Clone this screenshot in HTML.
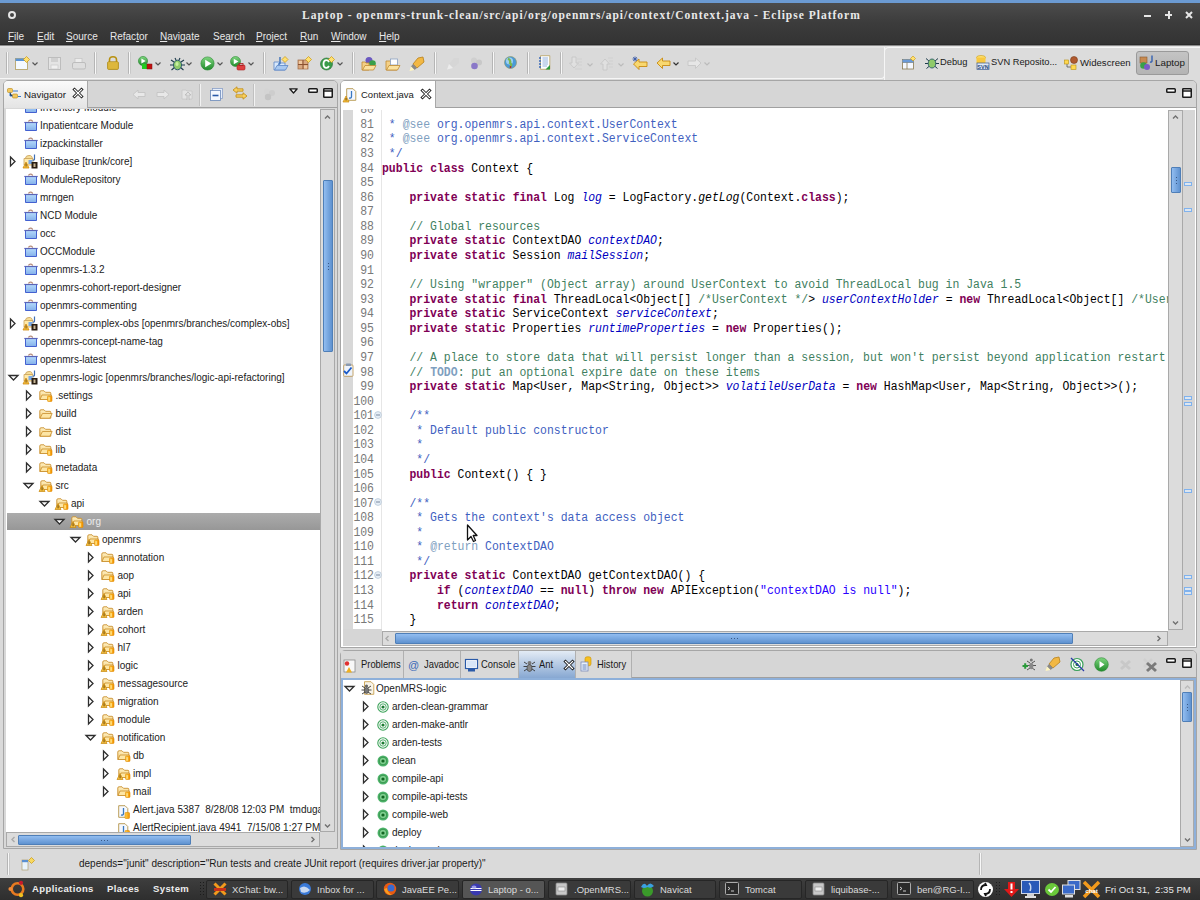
<!DOCTYPE html><html><head><meta charset="utf-8"><style>
*{margin:0;padding:0;box-sizing:border-box}
html,body{width:1200px;height:900px;overflow:hidden;background:#dadada;font-family:"Liberation Sans",sans-serif;font-size:10px;color:#000;position:relative}
.abs{position:absolute}
svg.abs{overflow:visible}
.t{position:absolute;white-space:pre;line-height:1}
.menu{color:#e8e8e8;font-size:10px}
.menu u{text-decoration:underline;text-underline-offset:1px;text-decoration-thickness:1px}
.sep{position:absolute;width:3px;background:linear-gradient(90deg,#b5b5b5 0,#b5b5b5 1px,#f8f8f8 1px,#f8f8f8 2px,#c8c8c8 2px);border-radius:1px}
.code{font-family:"Liberation Mono",monospace;font-size:11.46px}
.code .t,.t.code{transform:scaleY(1.14);transform-origin:0 8.8px}
.ln{color:#787878}
.k{color:#7f0055;font-weight:bold}
.c{color:#3f7f5f}
.d{color:#3f5fbf}
.dt{color:#7f9fbf}
.f{color:#0000c0;font-style:italic}
.s{color:#2a00ff}
.tree{font-size:10px;color:#222}
.tb{position:absolute;top:880px;height:19px;border:1px solid #262626;border-radius:2px;background:#3c3c3c;color:#dcdcdc;font-size:10.5px}
</style></head><body>
<svg width="0" height="0" style="position:absolute"><defs>
<linearGradient id="gblue" x1="0" y1="0" x2="0" y2="1"><stop offset="0" stop-color="#b4dafc"/><stop offset="1" stop-color="#84b0ea"/></linearGradient>
<linearGradient id="gyel" x1="0" y1="0" x2="0" y2="1"><stop offset="0" stop-color="#fff3c8"/><stop offset="1" stop-color="#f0c46a"/></linearGradient>
<linearGradient id="gora" x1="0" y1="0" x2="1" y2="0"><stop offset="0" stop-color="#ffd24a"/><stop offset="1" stop-color="#f29100"/></linearGradient>
<linearGradient id="gthumb" x1="0" y1="0" x2="1" y2="0"><stop offset="0" stop-color="#8db7e8"/><stop offset="1" stop-color="#5c8fcb"/></linearGradient>
<linearGradient id="gthumbh" x1="0" y1="0" x2="0" y2="1"><stop offset="0" stop-color="#8db7e8"/><stop offset="1" stop-color="#5c8fcb"/></linearGradient>
<linearGradient id="ggreen" x1="0" y1="0" x2="0" y2="1"><stop offset="0" stop-color="#7fd67f"/><stop offset="1" stop-color="#1f8a2a"/></linearGradient>
</defs></svg>
<div class="abs" style="left:0;top:0;width:1200px;height:45px;background:linear-gradient(#4e4e4e,#3c3c3c 50%,#333 97%,#2a2a2a 97%)"></div>
<div class="abs" style="left:0;top:45px;width:1200px;height:1px;background:#8a8a8a"></div>
<div class="abs" style="left:0;top:46px;width:1200px;height:2px;background:#e2e2e2"></div>
<div class="abs" style="left:0;top:0;width:1200px;height:3px;background:#6b9ad2"></div>
<div class="abs" style="left:8px;top:11px;width:8px;height:8px;border:2px solid #e6e6e6;border-radius:50%"></div>
<div class="t" style="left:302px;top:10px;color:#e9e9e9;font-family:'Liberation Serif',serif;font-weight:bold;font-size:11.5px;letter-spacing:1px">Laptop - openmrs-trunk-clean/src/api/org/openmrs/api/context/Context.java - Eclipse Platform</div>
<div class="abs" style="left:1144px;top:15px;width:7px;height:2px;background:#e6e6e6"></div>
<div class="abs" style="left:1165px;top:14px;width:7px;height:2px;background:#e6e6e6"></div><div class="abs" style="left:1167.5px;top:11px;width:2px;height:7.5px;background:#e6e6e6"></div>
<svg class="abs" style="left:1184.5px;top:10.5px" width="8" height="8" viewBox="0 0 8 8"><path d="M1 1 L7 7 M7 1 L1 7" stroke="#e6e6e6" stroke-width="2"/></svg>
<div class="t menu" style="left:8px;top:32px"><u>F</u>ile</div>
<div class="t menu" style="left:37px;top:32px"><u>E</u>dit</div>
<div class="t menu" style="left:66px;top:32px"><u>S</u>ource</div>
<div class="t menu" style="left:110px;top:32px">Refac<u>t</u>or</div>
<div class="t menu" style="left:160px;top:32px"><u>N</u>avigate</div>
<div class="t menu" style="left:213px;top:32px">Se<u>a</u>rch</div>
<div class="t menu" style="left:256px;top:32px"><u>P</u>roject</div>
<div class="t menu" style="left:300px;top:32px"><u>R</u>un</div>
<div class="t menu" style="left:331px;top:32px"><u>W</u>indow</div>
<div class="t menu" style="left:379px;top:32px"><u>H</u>elp</div>
<div class="sep" style="left:6px;top:52px;height:22px"></div>
<div class="sep" style="left:94px;top:52px;height:22px"></div>
<div class="sep" style="left:128px;top:52px;height:22px"></div>
<div class="sep" style="left:263px;top:52px;height:22px"></div>
<div class="sep" style="left:352px;top:52px;height:22px"></div>
<div class="sep" style="left:434px;top:52px;height:22px"></div>
<div class="sep" style="left:492px;top:52px;height:22px"></div>
<div class="sep" style="left:527px;top:52px;height:22px"></div>
<div class="sep" style="left:560px;top:52px;height:22px"></div>
<svg class="abs" style="left:15px;top:56px" width="15" height="14" viewBox="0 0 15 14"><rect x="0.5" y="2.5" width="12" height="11" fill="#f4f9ff" stroke="#b9a66a" stroke-width="0.9"/><rect x="0.5" y="2.5" width="12" height="2.5" fill="#5a93d6"/><path d="M11.5 0.5 L14.5 3.5 L11.5 6.5 L8.5 3.5 Z" fill="#ffe070" stroke="#c8960a" stroke-width="0.7"/></svg>
<svg class="abs" style="left:32px;top:62px" width="6" height="4" viewBox="0 0 6 4"><path d="M0.5 0.5 L3 3 L5.5 0.5" fill="none" stroke="#555" stroke-width="1.2"/></svg>
<svg class="abs" style="left:48px;top:57px" width="14" height="13" viewBox="0 0 14 13"><rect x="0.5" y="0.5" width="12" height="12" fill="#e4e4e4" stroke="#bdbdbd"/><rect x="3" y="1" width="7" height="4" fill="#d0d0d0"/><rect x="3" y="8" width="7" height="4" fill="#f0f0f0" stroke="#c4c4c4" stroke-width="0.6"/></svg>
<svg class="abs" style="left:72px;top:58px" width="14" height="12" viewBox="0 0 14 12"><rect x="3" y="0.5" width="7" height="4" fill="#ececec" stroke="#c4c4c4" stroke-width="0.7"/><rect x="0.5" y="4.5" width="13" height="6.5" rx="1.5" fill="#dedede" stroke="#bdbdbd"/></svg>
<svg class="abs" style="left:107px;top:56px" width="12" height="14" viewBox="0 0 12 14"><path d="M2.5 6 V4 Q2.5 0.8 6 0.8 Q9.5 0.8 9.5 4 V6" fill="none" stroke="#b8900e" stroke-width="1.6"/><rect x="0.6" y="5.8" width="10.8" height="7.6" rx="1" fill="#e8c44a" stroke="#a8840c" stroke-width="0.8"/><path d="M1 8 H11 M1 10 H11 M1 12 H11" stroke="#c29a1c" stroke-width="0.6"/></svg>
<svg class="abs" style="left:138px;top:56px" width="15" height="14" viewBox="0 0 15 14"><circle cx="5" cy="5" r="4.6" fill="url(#ggreen)" stroke="#2c8a34" stroke-width="0.6"/><path d="M3.39 2.47 L7.76 5 L3.39 7.529999999999999 Z" fill="#fff"/><rect x="4" y="8" width="5" height="5" fill="#22cc22"/><rect x="9" y="8" width="5" height="5" fill="#c01010" stroke="#801010" stroke-width="0.5"/></svg>
<svg class="abs" style="left:155px;top:62px" width="6" height="4" viewBox="0 0 6 4"><path d="M0.5 0.5 L3 3 L5.5 0.5" fill="none" stroke="#555" stroke-width="1.2"/></svg>
<svg class="abs" style="left:170px;top:57px" width="15" height="14" viewBox="0 0 15 14"><path d="M1 3 L4 5 M14 3 L11 5 M0 8 H4 M15 8 H11 M1.5 13 L4.5 10.5 M13.5 13 L10.5 10.5 M5 1 L6 3 M10 1 L9 3" stroke="#1c3a4a" stroke-width="1.1"/><ellipse cx="7.5" cy="8" rx="4" ry="4.8" fill="#8fca6a" stroke="#2a5a6a" stroke-width="1"/><ellipse cx="7" cy="7" rx="1.6" ry="2" fill="#c8f0a0"/></svg>
<svg class="abs" style="left:186px;top:62px" width="6" height="4" viewBox="0 0 6 4"><path d="M0.5 0.5 L3 3 L5.5 0.5" fill="none" stroke="#555" stroke-width="1.2"/></svg>
<svg class="abs" style="left:200px;top:56px" width="15" height="15" viewBox="0 0 15 15"><circle cx="7.5" cy="7.5" r="6.6" fill="url(#ggreen)" stroke="#2c8a34" stroke-width="0.6"/><path d="M5.19 3.87 L11.459999999999999 7.5 L5.19 11.129999999999999 Z" fill="#fff"/></svg>
<svg class="abs" style="left:217px;top:62px" width="6" height="4" viewBox="0 0 6 4"><path d="M0.5 0.5 L3 3 L5.5 0.5" fill="none" stroke="#555" stroke-width="1.2"/></svg>
<svg class="abs" style="left:230px;top:56px" width="16" height="15" viewBox="0 0 16 15"><circle cx="5.5" cy="5.5" r="5" fill="url(#ggreen)" stroke="#2c8a34" stroke-width="0.6"/><path d="M3.75 2.75 L8.5 5.5 L3.75 8.25 Z" fill="#fff"/><rect x="7" y="9" width="8" height="5" rx="1.2" fill="#e04040" stroke="#a82020" stroke-width="0.6"/><rect x="9" y="7.5" width="4" height="2" fill="none" stroke="#a82020" stroke-width="0.8"/></svg>
<svg class="abs" style="left:248px;top:62px" width="6" height="4" viewBox="0 0 6 4"><path d="M0.5 0.5 L3 3 L5.5 0.5" fill="none" stroke="#555" stroke-width="1.2"/></svg>
<svg class="abs" style="left:273px;top:56px" width="16" height="15" viewBox="0 0 16 15"><path d="M1 6 H6 L7 7 H12 V14 H1 Z" fill="#d8e8fb" stroke="#5a86c8" stroke-width="0.8"/><path d="M1.5 14 L4 9.5 H15 L12.5 14 Z" fill="#a8c8f0" stroke="#5a86c8" stroke-width="0.8"/><path d="M7 1 V7 Q7 8.5 5 8" fill="none" stroke="#3a6fb8" stroke-width="1.4"/><path d="M12 0.5 L15 3.5 L12 6.5 L9 3.5 Z" fill="#ffe070" stroke="#c8960a" stroke-width="0.7"/></svg>
<svg class="abs" style="left:297px;top:56px" width="15" height="14" viewBox="0 0 15 14"><rect x="1" y="4" width="10" height="9" fill="#d8a880" stroke="#a06840" stroke-width="0.7"/><path d="M6 4 V13 M1 8.5 H11" stroke="#8a5030" stroke-width="1"/><rect x="2" y="5" width="3" height="3" fill="#f0c8a0"/><rect x="7" y="9.5" width="3" height="3" fill="#f0c8a0"/><path d="M11.5 0.5 L14.5 3.5 L11.5 6.5 L8.5 3.5 Z" fill="#ffe070" stroke="#c8960a" stroke-width="0.7"/></svg>
<svg class="abs" style="left:320px;top:56px" width="15" height="15" viewBox="0 0 15 15"><circle cx="6.5" cy="8" r="6" fill="#3a9c4a" stroke="#1e6a2c" stroke-width="0.6"/><path d="M9 6 Q8 4.2 6.5 4.2 Q3.5 4.2 3.5 8 Q3.5 11.8 6.5 11.8 Q8 11.8 9 10" fill="none" stroke="#fff" stroke-width="1.8"/><path d="M11.5 0.5 L14.5 3.5 L11.5 6.5 L8.5 3.5 Z" fill="#ffe070" stroke="#c8960a" stroke-width="0.7"/></svg>
<svg class="abs" style="left:337px;top:62px" width="6" height="4" viewBox="0 0 6 4"><path d="M0.5 0.5 L3 3 L5.5 0.5" fill="none" stroke="#555" stroke-width="1.2"/></svg>
<svg class="abs" style="left:361px;top:56px" width="16" height="15" viewBox="0 0 16 15"><circle cx="8" cy="4.5" r="3.5" fill="#6a58c0"/><circle cx="11.5" cy="7.5" r="3.3" fill="#3aa04a"/><path d="M1 6 H4 L5 7 H8 V14 H1 Z" fill="#f4d088" stroke="#c08a30" stroke-width="0.8"/><path d="M1.5 14 L4 9.5 H15 L12.5 14 Z" fill="#fbe2a0" stroke="#c08a30" stroke-width="0.8"/></svg>
<svg class="abs" style="left:385px;top:56px" width="16" height="15" viewBox="0 0 16 15"><path d="M1 5 H5 L6 6 H12 V14 H1 Z" fill="#f4d088" stroke="#c08a30" stroke-width="0.8"/><rect x="5.5" y="3" width="7" height="6" fill="#fff" stroke="#8aa0c0" stroke-width="0.8"/><path d="M1.5 14 L4 9.5 H15 L12.5 14 Z" fill="#fbe2a0" stroke="#c08a30" stroke-width="0.8"/></svg>
<svg class="abs" style="left:409px;top:56px" width="16" height="15" viewBox="0 0 16 15"><path d="M9 2 L14 1 L15 6 L8 12 L4 8 Z" fill="#f2b844" stroke="#b8801a" stroke-width="0.8"/><path d="M4 8 L8 12 L5.5 14 L2 10.5 Z" fill="#8a8a8a"/><path d="M2 10.5 L5.5 14 L0.5 15 Z" fill="#fff6c0"/></svg>
<svg class="abs" style="left:446px;top:57px" width="14" height="13" viewBox="0 0 14 13"><path d="M8 1 L13 1 L13 6 L7 11 L3 7 Z" fill="#d6d6d6"/><path d="M3 7 L7 11 L1 12.5 Z" fill="#ececec"/></svg>
<svg class="abs" style="left:469px;top:57px" width="14" height="13" viewBox="0 0 14 13"><circle cx="5" cy="3.5" r="3" fill="#cfcfcf"/><circle cx="10" cy="5.5" r="3" fill="#c8c8c8"/><circle cx="5.5" cy="9" r="3.3" fill="#8a78c8"/></svg>
<svg class="abs" style="left:504px;top:56px" width="13" height="13" viewBox="0 0 13 13"><circle cx="6.5" cy="6.5" r="6" fill="#4a9ad8" stroke="#8a9a70" stroke-width="0.7"/><circle cx="5.5" cy="5" r="3.5" fill="#9ed0f0"/><path d="M4 2.5 Q7 4 6 7 Q8 8 6.5 10.5" stroke="#7ab850" stroke-width="2.2" fill="none"/><circle cx="6.5" cy="11" r="0.9" fill="#c02020"/></svg>
<svg class="abs" style="left:538px;top:55px" width="13" height="15" viewBox="0 0 13 15"><path d="M2.5 0.7 H11.8 V14.3 H2.5 Z" fill="#fbfdff" stroke="#b8a060" stroke-width="0.8"/><path d="M1 3 H3 M1 6 H3 M1 9 H3 M1 12 H3" stroke="#3a6ab8" stroke-width="1.4"/><path d="M4.5 3 H10 M4.5 5 H10 M4.5 7 H10 M4.5 9 H10 M4.5 11 H9" stroke="#8aaad8" stroke-width="0.9"/><path d="M12 10 V14.5 H7.5 Z" fill="#2a9a3a"/></svg>
<svg class="abs" style="left:569px;top:56px" width="14" height="15" viewBox="0 0 14 15"><path d="M3 1 H7 V7 H9.5 L5 12 L0.5 7 H3 Z" fill="#e0e0e0" stroke="#c4c4c4" stroke-width="0.8"/><path d="M8 3 H13 M9 6 H13 M9 9 H13 M6 13 H13" stroke="#cfcfcf" stroke-width="0.9"/></svg>
<svg class="abs" style="left:587px;top:63px" width="6" height="4" viewBox="0 0 6 4"><path d="M0.5 0.5 L3 3 L5.5 0.5" fill="none" stroke="#bbb" stroke-width="1.2"/></svg>
<svg class="abs" style="left:600px;top:56px" width="14" height="15" viewBox="0 0 14 15"><path d="M3 14 H7 V8 H9.5 L5 3 L0.5 8 H3 Z" fill="#e0e0e0" stroke="#c4c4c4" stroke-width="0.8"/><path d="M8 2 H13 M9 5 H13 M9 8 H13 M9 11 H13" stroke="#cfcfcf" stroke-width="0.9"/></svg>
<svg class="abs" style="left:618px;top:63px" width="6" height="4" viewBox="0 0 6 4"><path d="M0.5 0.5 L3 3 L5.5 0.5" fill="none" stroke="#bbb" stroke-width="1.2"/></svg>
<svg class="abs" style="left:632px;top:56px" width="17" height="14" viewBox="0 0 17 14"><path d="M1.5 8 L7 3 V6 H15 V10.5 H7 V13.5 Z" fill="#f8d870" stroke="#c88a10" stroke-width="0.9"/><path d="M3 0.5 V5.5 M0.5 3 H5.5 M1.2 1.2 L4.8 4.8 M4.8 1.2 L1.2 4.8" stroke="#3a5aa8" stroke-width="0.9"/></svg>
<svg class="abs" style="left:656px;top:57px" width="15" height="12" viewBox="0 0 15 12"><path d="M1 6 L6.5 1 V4 H14 V8.5 H6.5 V11.5 Z" fill="#f8d870" stroke="#c88a10" stroke-width="0.9"/></svg>
<svg class="abs" style="left:673px;top:62px" width="6" height="4" viewBox="0 0 6 4"><path d="M0.5 0.5 L3 3 L5.5 0.5" fill="none" stroke="#333" stroke-width="1.2"/></svg>
<svg class="abs" style="left:687px;top:57px" width="15" height="12" viewBox="0 0 15 12"><path d="M14 6 L8.5 1 V4 H1 V8.5 H8.5 V11.5 Z" fill="#e6e6e6" stroke="#c6c6c6" stroke-width="0.9"/></svg>
<svg class="abs" style="left:704px;top:62px" width="6" height="4" viewBox="0 0 6 4"><path d="M0.5 0.5 L3 3 L5.5 0.5" fill="none" stroke="#bbb" stroke-width="1.2"/></svg>
<div class="abs" style="left:-10px;top:47px;width:895px;height:32px;border-right:1px solid #f6f6f6;border-bottom:1px solid #f6f6f6;border-radius:0 0 4px 0"></div>
<div class="abs" style="left:884px;top:47px;width:316px;height:33px;border-left:1px solid #f6f6f6;border-top:1px solid #f6f6f6;border-radius:5px 0 0 0;background:#dcdcdc"></div>
<svg class="abs" style="left:902px;top:56px" width="14" height="14" viewBox="0 0 14 14"><rect x="0.5" y="3.5" width="11" height="9.5" fill="#f4f8ff" stroke="#8a7a50" stroke-width="0.8"/><path d="M0.5 6.5 H11.5 M5 3.5 V13" stroke="#8a7a50" stroke-width="0.8"/><rect x="0.5" y="3.5" width="11" height="3" fill="#6a9ad8"/><path d="M11 0 L13.5 2.5 L11 5 L8.5 2.5 Z" fill="#ffe070" stroke="#c8960a" stroke-width="0.6"/></svg>
<svg class="abs" style="left:925px;top:56px" width="14" height="14" viewBox="0 0 14 14"><path d="M1 2.5 L4 5 M13 2.5 L10 5 M0 7.5 H4 M14 7.5 H10 M1.5 12.5 L4.5 10 M12.5 12.5 L9.5 10" stroke="#1c3a4a" stroke-width="1"/><ellipse cx="7" cy="7.5" rx="3.8" ry="4.5" fill="#8fca6a" stroke="#2a5a6a" stroke-width="0.9"/></svg>
<div class="t" style="left:940px;top:58px;font-size:9.3px;color:#1a1a1a">Debug</div>
<svg class="abs" style="left:975px;top:55px" width="15" height="15" viewBox="0 0 15 15"><ellipse cx="6" cy="2.5" rx="4.5" ry="2" fill="#ffe070" stroke="#c89a10" stroke-width="0.6"/><rect x="1.5" y="2.5" width="9" height="6" fill="#f8c840"/><rect x="2" y="8" width="12" height="6.5" fill="#dfe8f5" stroke="#3a5a90" stroke-width="0.7"/><text x="8" y="13.5" font-size="5.5" font-family="Liberation Sans" font-weight="bold" fill="#2a4a80" text-anchor="middle">SVN</text></svg>
<div class="t" style="left:991px;top:58px;font-size:9.3px;color:#1a1a1a">SVN Reposito...</div>
<svg class="abs" style="left:1064px;top:56px" width="15" height="14" viewBox="0 0 15 14"><circle cx="10" cy="4" r="3.5" fill="#b05a30" stroke="#7a3a18" stroke-width="0.6"/><path d="M3 5 V11 H8" stroke="#555" stroke-width="0.8" fill="none"/><rect x="0.5" y="4" width="4" height="4" fill="#ffd850" stroke="#b89010" stroke-width="0.6"/><rect x="7" y="9" width="5" height="4.5" fill="#ffd850" stroke="#b89010" stroke-width="0.6"/></svg>
<div class="t" style="left:1080px;top:58px;font-size:9.6px;color:#1a1a1a">Widescreen</div>
<div class="abs" style="left:1136px;top:51px;width:53px;height:24px;border:1px solid #9a9a9a;border-radius:3px;background:linear-gradient(#c4c4c4,#b4b4b4)"></div>
<svg class="abs" style="left:1139px;top:55px" width="16" height="16" viewBox="0 0 16 16"><rect x="1" y="2" width="7" height="6" fill="#c88a50" stroke="#8a5a30" stroke-width="0.6"/><circle cx="4.5" cy="10.5" r="3.3" fill="#3aa04a"/><circle cx="8" cy="12" r="3" fill="#7a5ac8"/><path d="M13 0.5 V6 Q13 7.5 11 7" stroke="#2a5ab0" stroke-width="1.3" fill="none"/></svg>
<div class="t" style="left:1155px;top:58px;font-size:9.8px;color:#1a1a1a">Laptop</div>
<div class="abs" style="left:3px;top:80px;width:335px;height:769px;border:1px solid #a6a6a6;border-radius:5px 5px 0 0;background:#d8d8d8"></div>
<div class="abs" style="left:4px;top:81px;width:333px;height:27px;border-bottom:1px solid #a0a0a0;border-radius:4px 4px 0 0;background:#d6d6d6"></div>
<div class="abs" style="left:4px;top:81px;width:84px;height:27px;border-right:1px solid #a8a8a8;border-radius:4px 0 0 0;background:linear-gradient(#fafafa,#e4e4e4)"></div>
<div class="t" style="left:24px;top:90px;font-size:9.8px;color:#1a1a1a">Navigator</div>
<svg class="abs" style="left:7px;top:88px" width="15" height="12" viewBox="0 0 15 12"><rect x="0.5" y="0.5" width="5" height="4" rx="1" fill="#f2c860" stroke="#b8860b" stroke-width="0.6"/><rect x="5.5" y="6" width="5" height="4" rx="1" fill="#f2c860" stroke="#b8860b" stroke-width="0.6"/><path d="M3 4.5 V8 H5.5 M6 3 H11 M11 8.5 H14" stroke="#3a7ac8" stroke-width="1"/></svg>
<svg class="abs" style="left:73px;top:88px" width="10" height="10" viewBox="0 0 10 10"><path d="M1.5 1.5 L8.5 8.5 M8.5 1.5 L1.5 8.5" stroke="#1a1a1a" stroke-width="3" stroke-linecap="square"/><path d="M1.5 1.5 L8.5 8.5 M8.5 1.5 L1.5 8.5" stroke="#fff" stroke-width="1.2" stroke-linecap="square"/></svg>
<svg class="abs" style="left:132px;top:89px" width="14" height="11" viewBox="0 0 14 11"><path d="M1 5.5 L6 1 V3.5 H13 V7.5 H6 V10 Z" fill="#e8e8e8" stroke="#c4c4c4" stroke-width="0.9"/></svg>
<svg class="abs" style="left:156px;top:89px" width="14" height="11" viewBox="0 0 14 11"><path d="M13 5.5 L8 1 V3.5 H1 V7.5 H8 V10 Z" fill="#e8e8e8" stroke="#c4c4c4" stroke-width="0.9"/></svg>
<svg class="abs" style="left:181px;top:88px" width="13" height="13" viewBox="0 0 13 13"><path d="M1 2 H5 L6 3 H11 V11 H1 Z" fill="#e4e4e4" stroke="#c6c6c6" stroke-width="0.8"/><path d="M6 12 V7 H4 L7 4 L10 7 H8 V12" fill="#e0e0e0" stroke="#b8b8b8" stroke-width="0.8"/></svg>
<div class="abs" style="left:199px;top:84px;width:2px;height:22px;background:linear-gradient(90deg,#c0c0c0 50%,#f2f2f2 50%)"></div>
<svg class="abs" style="left:210px;top:88px" width="13" height="13" viewBox="0 0 13 13"><rect x="2.5" y="0.5" width="10" height="10" fill="#e6eefa" stroke="#8aa0c8" stroke-width="0.8"/><rect x="0.5" y="2.5" width="10" height="10" fill="#f4f8ff" stroke="#6a88b8" stroke-width="0.8"/><path d="M2.5 7.5 H8.5" stroke="#2a5aa8" stroke-width="1.6"/></svg>
<svg class="abs" style="left:232px;top:86px" width="16" height="15" viewBox="0 0 16 15"><path d="M1 4 L5 0.8 V2.8 H11 V5.2 H5 V7.2 Z" fill="#f8d060" stroke="#c08a10" stroke-width="0.8"/><path d="M15 10 L11 6.8 V8.8 H4 V11.2 H11 V13.2 Z" fill="#f8d060" stroke="#c08a10" stroke-width="0.8"/></svg>
<div class="abs" style="left:253px;top:84px;width:2px;height:22px;background:linear-gradient(90deg,#c0c0c0 50%,#f2f2f2 50%)"></div>
<svg class="abs" style="left:263px;top:88px" width="13" height="13" viewBox="0 0 13 13"><circle cx="4" cy="3.5" r="3" fill="#d4d4d4"/><circle cx="9" cy="5" r="3" fill="#cdcdcd"/><circle cx="5" cy="9" r="3.2" fill="#c4c4c4"/></svg>
<svg class="abs" style="left:289px;top:88px" width="9" height="6" viewBox="0 0 9 6"><path d="M0.8 0.8 H8.2 L4.5 5 Z" fill="#fff" stroke="#1a1a1a" stroke-width="1.3" stroke-linejoin="round"/></svg>
<svg class="abs" style="left:308px;top:88px" width="10" height="6" viewBox="0 0 10 6"><rect x="0.75" y="0.75" width="8.5" height="3.5" rx="0.8" fill="#fff" stroke="#1a1a1a" stroke-width="1.5"/></svg><svg class="abs" style="left:323px;top:88px" width="10" height="10" viewBox="0 0 10 10"><rect x="0.75" y="0.75" width="8.5" height="8.5" rx="0.6" fill="#fff" stroke="#1a1a1a" stroke-width="1.5"/><path d="M0.75 3 H9.25" stroke="#1a1a1a" stroke-width="1.5"/></svg>
<div class="abs" style="left:6px;top:109px;width:314px;height:723px;overflow:hidden;background:#fff">
<svg class="abs" style="left:17.5px;top:-8px" width="14" height="12" viewBox="0 0 14 12"><path d="M4.5 2.5 Q5 1 7 1.2 Q8.5 1.5 8.5 2.8" fill="none" stroke="#b48a78" stroke-width="1.2"/><path d="M1.5 3.5 H12.5 V11.5 H1.5 Z" fill="url(#gblue)" stroke="#3452cc" stroke-width="0.9"/><path d="M0.3 3.5 H13.7" stroke="#5a64b8" stroke-width="1.2"/></svg>
<div class="t tree" style="left:34.0px;top:-6.17px;color:#222">Inventory Module</div>
<svg class="abs" style="left:17.5px;top:10px" width="14" height="12" viewBox="0 0 14 12"><path d="M4.5 2.5 Q5 1 7 1.2 Q8.5 1.5 8.5 2.8" fill="none" stroke="#b48a78" stroke-width="1.2"/><path d="M1.5 3.5 H12.5 V11.5 H1.5 Z" fill="url(#gblue)" stroke="#3452cc" stroke-width="0.9"/><path d="M0.3 3.5 H13.7" stroke="#5a64b8" stroke-width="1.2"/></svg>
<div class="t tree" style="left:34.0px;top:11.83px;color:#222">Inpatientcare Module</div>
<svg class="abs" style="left:17.5px;top:28px" width="14" height="12" viewBox="0 0 14 12"><path d="M4.5 2.5 Q5 1 7 1.2 Q8.5 1.5 8.5 2.8" fill="none" stroke="#b48a78" stroke-width="1.2"/><path d="M1.5 3.5 H12.5 V11.5 H1.5 Z" fill="url(#gblue)" stroke="#3452cc" stroke-width="0.9"/><path d="M0.3 3.5 H13.7" stroke="#5a64b8" stroke-width="1.2"/></svg>
<div class="t tree" style="left:34.0px;top:29.83px;color:#222">izpackinstaller</div>
<svg class="abs" style="left:3.0px;top:46.5px" width="7" height="11" viewBox="0 0 7 11"><path d="M1.5 1 L6 5.5 L1.5 10 Z" fill="#fff" stroke="#2e2e2e" stroke-width="1.3" stroke-linejoin="miter"/></svg>
<svg class="abs" style="left:17.0px;top:45px" width="15" height="15" viewBox="0 0 15 15"><path d="M2 5 Q3 1 6 1.5 Q9 1 9.5 5 Z" fill="#f6de9a" stroke="#c9a055" stroke-width="0.8"/><path d="M1 4.5 H10 V11 H1Z" fill="#ffe9a8" stroke="#caa25a" stroke-width="0.8"/><path d="M11.5 0.5 V5 Q11.5 6.5 9.5 6" fill="none" stroke="#3f6fb5" stroke-width="1.2"/><rect x="5.5" y="6" width="4" height="4" fill="#7aa9e6"/><path d="M3 8 L6 14 H0 Z" fill="#f3bd3d" stroke="#d08a10" stroke-width="0.8"/><rect x="2.6" y="9.5" width="0.9" height="3" fill="#6b4a10"/><rect x="8.5" y="8" width="6" height="6.5" fill="#2a1e12"/><rect x="10.5" y="9.5" width="2" height="3.5" fill="#c8b898"/></svg>
<div class="t tree" style="left:34.0px;top:47.83px;color:#222">liquibase [trunk/core]</div>
<svg class="abs" style="left:17.5px;top:64px" width="14" height="12" viewBox="0 0 14 12"><path d="M4.5 2.5 Q5 1 7 1.2 Q8.5 1.5 8.5 2.8" fill="none" stroke="#b48a78" stroke-width="1.2"/><path d="M1.5 3.5 H12.5 V11.5 H1.5 Z" fill="url(#gblue)" stroke="#3452cc" stroke-width="0.9"/><path d="M0.3 3.5 H13.7" stroke="#5a64b8" stroke-width="1.2"/></svg>
<div class="t tree" style="left:34.0px;top:65.83px;color:#222">ModuleRepository</div>
<svg class="abs" style="left:17.5px;top:82px" width="14" height="12" viewBox="0 0 14 12"><path d="M4.5 2.5 Q5 1 7 1.2 Q8.5 1.5 8.5 2.8" fill="none" stroke="#b48a78" stroke-width="1.2"/><path d="M1.5 3.5 H12.5 V11.5 H1.5 Z" fill="url(#gblue)" stroke="#3452cc" stroke-width="0.9"/><path d="M0.3 3.5 H13.7" stroke="#5a64b8" stroke-width="1.2"/></svg>
<div class="t tree" style="left:34.0px;top:83.83px;color:#222">mrngen</div>
<svg class="abs" style="left:17.5px;top:100px" width="14" height="12" viewBox="0 0 14 12"><path d="M4.5 2.5 Q5 1 7 1.2 Q8.5 1.5 8.5 2.8" fill="none" stroke="#b48a78" stroke-width="1.2"/><path d="M1.5 3.5 H12.5 V11.5 H1.5 Z" fill="url(#gblue)" stroke="#3452cc" stroke-width="0.9"/><path d="M0.3 3.5 H13.7" stroke="#5a64b8" stroke-width="1.2"/></svg>
<div class="t tree" style="left:34.0px;top:101.83px;color:#222">NCD Module</div>
<svg class="abs" style="left:17.5px;top:118px" width="14" height="12" viewBox="0 0 14 12"><path d="M4.5 2.5 Q5 1 7 1.2 Q8.5 1.5 8.5 2.8" fill="none" stroke="#b48a78" stroke-width="1.2"/><path d="M1.5 3.5 H12.5 V11.5 H1.5 Z" fill="url(#gblue)" stroke="#3452cc" stroke-width="0.9"/><path d="M0.3 3.5 H13.7" stroke="#5a64b8" stroke-width="1.2"/></svg>
<div class="t tree" style="left:34.0px;top:119.83px;color:#222">occ</div>
<svg class="abs" style="left:17.5px;top:136px" width="14" height="12" viewBox="0 0 14 12"><path d="M4.5 2.5 Q5 1 7 1.2 Q8.5 1.5 8.5 2.8" fill="none" stroke="#b48a78" stroke-width="1.2"/><path d="M1.5 3.5 H12.5 V11.5 H1.5 Z" fill="url(#gblue)" stroke="#3452cc" stroke-width="0.9"/><path d="M0.3 3.5 H13.7" stroke="#5a64b8" stroke-width="1.2"/></svg>
<div class="t tree" style="left:34.0px;top:137.83px;color:#222">OCCModule</div>
<svg class="abs" style="left:17.5px;top:154px" width="14" height="12" viewBox="0 0 14 12"><path d="M4.5 2.5 Q5 1 7 1.2 Q8.5 1.5 8.5 2.8" fill="none" stroke="#b48a78" stroke-width="1.2"/><path d="M1.5 3.5 H12.5 V11.5 H1.5 Z" fill="url(#gblue)" stroke="#3452cc" stroke-width="0.9"/><path d="M0.3 3.5 H13.7" stroke="#5a64b8" stroke-width="1.2"/></svg>
<div class="t tree" style="left:34.0px;top:155.83px;color:#222">openmrs-1.3.2</div>
<svg class="abs" style="left:17.5px;top:172px" width="14" height="12" viewBox="0 0 14 12"><path d="M4.5 2.5 Q5 1 7 1.2 Q8.5 1.5 8.5 2.8" fill="none" stroke="#b48a78" stroke-width="1.2"/><path d="M1.5 3.5 H12.5 V11.5 H1.5 Z" fill="url(#gblue)" stroke="#3452cc" stroke-width="0.9"/><path d="M0.3 3.5 H13.7" stroke="#5a64b8" stroke-width="1.2"/></svg>
<div class="t tree" style="left:34.0px;top:173.83px;color:#222">openmrs-cohort-report-designer</div>
<svg class="abs" style="left:17.5px;top:190px" width="14" height="12" viewBox="0 0 14 12"><path d="M4.5 2.5 Q5 1 7 1.2 Q8.5 1.5 8.5 2.8" fill="none" stroke="#b48a78" stroke-width="1.2"/><path d="M1.5 3.5 H12.5 V11.5 H1.5 Z" fill="url(#gblue)" stroke="#3452cc" stroke-width="0.9"/><path d="M0.3 3.5 H13.7" stroke="#5a64b8" stroke-width="1.2"/></svg>
<div class="t tree" style="left:34.0px;top:191.83px;color:#222">openmrs-commenting</div>
<svg class="abs" style="left:3.0px;top:208.5px" width="7" height="11" viewBox="0 0 7 11"><path d="M1.5 1 L6 5.5 L1.5 10 Z" fill="#fff" stroke="#2e2e2e" stroke-width="1.3" stroke-linejoin="miter"/></svg>
<svg class="abs" style="left:17.0px;top:207px" width="15" height="15" viewBox="0 0 15 15"><path d="M2 5 Q3 1 6 1.5 Q9 1 9.5 5 Z" fill="#f6de9a" stroke="#c9a055" stroke-width="0.8"/><path d="M1 4.5 H10 V11 H1Z" fill="#ffe9a8" stroke="#caa25a" stroke-width="0.8"/><path d="M11.5 0.5 V5 Q11.5 6.5 9.5 6" fill="none" stroke="#3f6fb5" stroke-width="1.2"/><rect x="5.5" y="6" width="4" height="4" fill="#7aa9e6"/><path d="M3 8 L6 14 H0 Z" fill="#f3bd3d" stroke="#d08a10" stroke-width="0.8"/><rect x="2.6" y="9.5" width="0.9" height="3" fill="#6b4a10"/><rect x="8.5" y="8" width="6" height="6.5" fill="#2a1e12"/><rect x="10.5" y="9.5" width="2" height="3.5" fill="#c8b898"/></svg>
<div class="t tree" style="left:34.0px;top:209.83px;color:#222">openmrs-complex-obs [openmrs/branches/complex-obs]</div>
<svg class="abs" style="left:17.5px;top:226px" width="14" height="12" viewBox="0 0 14 12"><path d="M4.5 2.5 Q5 1 7 1.2 Q8.5 1.5 8.5 2.8" fill="none" stroke="#b48a78" stroke-width="1.2"/><path d="M1.5 3.5 H12.5 V11.5 H1.5 Z" fill="url(#gblue)" stroke="#3452cc" stroke-width="0.9"/><path d="M0.3 3.5 H13.7" stroke="#5a64b8" stroke-width="1.2"/></svg>
<div class="t tree" style="left:34.0px;top:227.83px;color:#222">openmrs-concept-name-tag</div>
<svg class="abs" style="left:17.5px;top:244px" width="14" height="12" viewBox="0 0 14 12"><path d="M4.5 2.5 Q5 1 7 1.2 Q8.5 1.5 8.5 2.8" fill="none" stroke="#b48a78" stroke-width="1.2"/><path d="M1.5 3.5 H12.5 V11.5 H1.5 Z" fill="url(#gblue)" stroke="#3452cc" stroke-width="0.9"/><path d="M0.3 3.5 H13.7" stroke="#5a64b8" stroke-width="1.2"/></svg>
<div class="t tree" style="left:34.0px;top:245.83px;color:#222">openmrs-latest</div>
<svg class="abs" style="left:1.5px;top:264.5px" width="11" height="7" viewBox="0 0 11 7"><path d="M1 1.5 L10 1.5 L5.5 6 Z" fill="#fff" stroke="#2e2e2e" stroke-width="1.3"/></svg>
<svg class="abs" style="left:17.0px;top:261px" width="15" height="15" viewBox="0 0 15 15"><path d="M2 5 Q3 1 6 1.5 Q9 1 9.5 5 Z" fill="#f6de9a" stroke="#c9a055" stroke-width="0.8"/><path d="M1 4.5 H10 V11 H1Z" fill="#ffe9a8" stroke="#caa25a" stroke-width="0.8"/><path d="M11.5 0.5 V5 Q11.5 6.5 9.5 6" fill="none" stroke="#3f6fb5" stroke-width="1.2"/><rect x="5.5" y="6" width="4" height="4" fill="#7aa9e6"/><path d="M3 8 L6 14 H0 Z" fill="#f3bd3d" stroke="#d08a10" stroke-width="0.8"/><rect x="2.6" y="9.5" width="0.9" height="3" fill="#6b4a10"/><rect x="8.5" y="8" width="6" height="6.5" fill="#2a1e12"/><rect x="10.5" y="9.5" width="2" height="3.5" fill="#c8b898"/></svg>
<div class="t tree" style="left:34.0px;top:263.83px;color:#222">openmrs-logic [openmrs/branches/logic-api-refactoring]</div>
<svg class="abs" style="left:18.5px;top:280.5px" width="7" height="11" viewBox="0 0 7 11"><path d="M1.5 1 L6 5.5 L1.5 10 Z" fill="#fff" stroke="#2e2e2e" stroke-width="1.3" stroke-linejoin="miter"/></svg>
<svg class="abs" style="left:33.0px;top:281px" width="14" height="12" viewBox="0 0 14 12"><path d="M0.8 2 Q0.8 0.8 2 0.8 H5 L6.5 2.3 H11 Q11.8 2.3 11.8 3.2 V9.5 H0.8 Z" fill="url(#gyel)" stroke="#c98f2e" stroke-width="0.9"/><path d="M1 9.5 L3 5 H12.5 L10.5 9.5 Z" fill="#fde6a6" stroke="#c98f2e" stroke-width="0.8"/><rect x="8.5" y="6" width="4.5" height="5.5" rx="0.8" fill="url(#gora)" stroke="#e08a00" stroke-width="0.6"/><rect x="9.6" y="7.2" width="1.1" height="3.5" fill="#ffe9a0"/></svg>
<div class="t tree" style="left:49.5px;top:281.83px;color:#222">.settings</div>
<svg class="abs" style="left:18.5px;top:298.5px" width="7" height="11" viewBox="0 0 7 11"><path d="M1.5 1 L6 5.5 L1.5 10 Z" fill="#fff" stroke="#2e2e2e" stroke-width="1.3" stroke-linejoin="miter"/></svg>
<svg class="abs" style="left:33.0px;top:300px" width="14" height="10" viewBox="0 0 14 10"><path d="M0.8 2 Q0.8 0.8 2 0.8 H5 L6.5 2.3 H11 Q11.8 2.3 11.8 3.2 V9.2 H0.8 Z" fill="url(#gyel)" stroke="#c98f2e" stroke-width="0.9"/><path d="M1 9.2 L3.5 4.5 H13.2 L10.8 9.2 Z" fill="#fde6a6" stroke="#c98f2e" stroke-width="0.8"/></svg>
<div class="t tree" style="left:49.5px;top:299.83px;color:#222">build</div>
<svg class="abs" style="left:18.5px;top:316.5px" width="7" height="11" viewBox="0 0 7 11"><path d="M1.5 1 L6 5.5 L1.5 10 Z" fill="#fff" stroke="#2e2e2e" stroke-width="1.3" stroke-linejoin="miter"/></svg>
<svg class="abs" style="left:33.0px;top:318px" width="14" height="10" viewBox="0 0 14 10"><path d="M0.8 2 Q0.8 0.8 2 0.8 H5 L6.5 2.3 H11 Q11.8 2.3 11.8 3.2 V9.2 H0.8 Z" fill="url(#gyel)" stroke="#c98f2e" stroke-width="0.9"/><path d="M1 9.2 L3.5 4.5 H13.2 L10.8 9.2 Z" fill="#fde6a6" stroke="#c98f2e" stroke-width="0.8"/></svg>
<div class="t tree" style="left:49.5px;top:317.83px;color:#222">dist</div>
<svg class="abs" style="left:18.5px;top:334.5px" width="7" height="11" viewBox="0 0 7 11"><path d="M1.5 1 L6 5.5 L1.5 10 Z" fill="#fff" stroke="#2e2e2e" stroke-width="1.3" stroke-linejoin="miter"/></svg>
<svg class="abs" style="left:33.0px;top:335px" width="14" height="12" viewBox="0 0 14 12"><path d="M0.8 2 Q0.8 0.8 2 0.8 H5 L6.5 2.3 H11 Q11.8 2.3 11.8 3.2 V9.5 H0.8 Z" fill="url(#gyel)" stroke="#c98f2e" stroke-width="0.9"/><path d="M1 9.5 L3 5 H12.5 L10.5 9.5 Z" fill="#fde6a6" stroke="#c98f2e" stroke-width="0.8"/><rect x="8.5" y="6" width="4.5" height="5.5" rx="0.8" fill="url(#gora)" stroke="#e08a00" stroke-width="0.6"/><rect x="9.6" y="7.2" width="1.1" height="3.5" fill="#ffe9a0"/></svg>
<div class="t tree" style="left:49.5px;top:335.83px;color:#222">lib</div>
<svg class="abs" style="left:18.5px;top:352.5px" width="7" height="11" viewBox="0 0 7 11"><path d="M1.5 1 L6 5.5 L1.5 10 Z" fill="#fff" stroke="#2e2e2e" stroke-width="1.3" stroke-linejoin="miter"/></svg>
<svg class="abs" style="left:33.0px;top:353px" width="14" height="12" viewBox="0 0 14 12"><path d="M0.8 2 Q0.8 0.8 2 0.8 H5 L6.5 2.3 H11 Q11.8 2.3 11.8 3.2 V9.5 H0.8 Z" fill="url(#gyel)" stroke="#c98f2e" stroke-width="0.9"/><path d="M1 9.5 L3 5 H12.5 L10.5 9.5 Z" fill="#fde6a6" stroke="#c98f2e" stroke-width="0.8"/><rect x="8.5" y="6" width="4.5" height="5.5" rx="0.8" fill="url(#gora)" stroke="#e08a00" stroke-width="0.6"/><rect x="9.6" y="7.2" width="1.1" height="3.5" fill="#ffe9a0"/></svg>
<div class="t tree" style="left:49.5px;top:353.83px;color:#222">metadata</div>
<svg class="abs" style="left:17.0px;top:372.5px" width="11" height="7" viewBox="0 0 11 7"><path d="M1 1.5 L10 1.5 L5.5 6 Z" fill="#fff" stroke="#2e2e2e" stroke-width="1.3"/></svg>
<svg class="abs" style="left:33.0px;top:371px" width="14" height="12" viewBox="0 0 14 12"><path d="M1.8 2 Q1.8 0.8 3 0.8 H6 L7.5 2.3 H11 Q11.8 2.3 11.8 3.2 V9.5 H1.8 Z" fill="url(#gyel)" stroke="#c98f2e" stroke-width="0.9"/><path d="M2 9.5 L4 5 H12.5 L10.5 9.5 Z" fill="#fde6a6" stroke="#c98f2e" stroke-width="0.8"/><path d="M3 5.5 L6 11.5 H0 Z" fill="#f3bd3d" stroke="#c98a10" stroke-width="0.7"/><rect x="2.6" y="7.3" width="0.9" height="3" fill="#5a3a08"/><rect x="8.5" y="6" width="4.5" height="5.5" rx="0.8" fill="url(#gora)" stroke="#e08a00" stroke-width="0.6"/><rect x="9.6" y="7.2" width="1.1" height="3.5" fill="#ffe9a0"/></svg>
<div class="t tree" style="left:49.5px;top:371.83px;color:#222">src</div>
<svg class="abs" style="left:32.5px;top:390.5px" width="11" height="7" viewBox="0 0 11 7"><path d="M1 1.5 L10 1.5 L5.5 6 Z" fill="#fff" stroke="#2e2e2e" stroke-width="1.3"/></svg>
<svg class="abs" style="left:48.5px;top:389px" width="14" height="12" viewBox="0 0 14 12"><path d="M1.8 2 Q1.8 0.8 3 0.8 H6 L7.5 2.3 H11 Q11.8 2.3 11.8 3.2 V9.5 H1.8 Z" fill="url(#gyel)" stroke="#c98f2e" stroke-width="0.9"/><path d="M2 9.5 L4 5 H12.5 L10.5 9.5 Z" fill="#fde6a6" stroke="#c98f2e" stroke-width="0.8"/><path d="M3 5.5 L6 11.5 H0 Z" fill="#f3bd3d" stroke="#c98a10" stroke-width="0.7"/><rect x="2.6" y="7.3" width="0.9" height="3" fill="#5a3a08"/><rect x="8.5" y="6" width="4.5" height="5.5" rx="0.8" fill="url(#gora)" stroke="#e08a00" stroke-width="0.6"/><rect x="9.6" y="7.2" width="1.1" height="3.5" fill="#ffe9a0"/></svg>
<div class="t tree" style="left:65.0px;top:389.83px;color:#222">api</div>
<div class="abs" style="left:1px;top:404px;width:313px;height:17px;background:linear-gradient(#acacac,#979797)"></div>
<svg class="abs" style="left:48.0px;top:408.5px" width="11" height="7" viewBox="0 0 11 7"><path d="M1 1.5 L10 1.5 L5.5 6 Z" fill="#fff" stroke="#2e2e2e" stroke-width="1.3"/></svg>
<svg class="abs" style="left:64.0px;top:407px" width="14" height="12" viewBox="0 0 14 12"><path d="M1.8 2 Q1.8 0.8 3 0.8 H6 L7.5 2.3 H11 Q11.8 2.3 11.8 3.2 V9.5 H1.8 Z" fill="url(#gyel)" stroke="#c98f2e" stroke-width="0.9"/><path d="M2 9.5 L4 5 H12.5 L10.5 9.5 Z" fill="#fde6a6" stroke="#c98f2e" stroke-width="0.8"/><path d="M3 5.5 L6 11.5 H0 Z" fill="#f3bd3d" stroke="#c98a10" stroke-width="0.7"/><rect x="2.6" y="7.3" width="0.9" height="3" fill="#5a3a08"/><rect x="8.5" y="6" width="4.5" height="5.5" rx="0.8" fill="url(#gora)" stroke="#e08a00" stroke-width="0.6"/><rect x="9.6" y="7.2" width="1.1" height="3.5" fill="#ffe9a0"/></svg>
<div class="t tree" style="left:80.5px;top:407.83px;color:#ececec">org</div>
<svg class="abs" style="left:63.5px;top:426.5px" width="11" height="7" viewBox="0 0 11 7"><path d="M1 1.5 L10 1.5 L5.5 6 Z" fill="#fff" stroke="#2e2e2e" stroke-width="1.3"/></svg>
<svg class="abs" style="left:79.5px;top:425px" width="14" height="12" viewBox="0 0 14 12"><path d="M1.8 2 Q1.8 0.8 3 0.8 H6 L7.5 2.3 H11 Q11.8 2.3 11.8 3.2 V9.5 H1.8 Z" fill="url(#gyel)" stroke="#c98f2e" stroke-width="0.9"/><path d="M2 9.5 L4 5 H12.5 L10.5 9.5 Z" fill="#fde6a6" stroke="#c98f2e" stroke-width="0.8"/><path d="M3 5.5 L6 11.5 H0 Z" fill="#f3bd3d" stroke="#c98a10" stroke-width="0.7"/><rect x="2.6" y="7.3" width="0.9" height="3" fill="#5a3a08"/><rect x="8.5" y="6" width="4.5" height="5.5" rx="0.8" fill="url(#gora)" stroke="#e08a00" stroke-width="0.6"/><rect x="9.6" y="7.2" width="1.1" height="3.5" fill="#ffe9a0"/></svg>
<div class="t tree" style="left:96.0px;top:425.83px;color:#222">openmrs</div>
<svg class="abs" style="left:80.5px;top:442.5px" width="7" height="11" viewBox="0 0 7 11"><path d="M1.5 1 L6 5.5 L1.5 10 Z" fill="#fff" stroke="#2e2e2e" stroke-width="1.3" stroke-linejoin="miter"/></svg>
<svg class="abs" style="left:95.0px;top:443px" width="14" height="12" viewBox="0 0 14 12"><path d="M0.8 2 Q0.8 0.8 2 0.8 H5 L6.5 2.3 H11 Q11.8 2.3 11.8 3.2 V9.5 H0.8 Z" fill="url(#gyel)" stroke="#c98f2e" stroke-width="0.9"/><path d="M1 9.5 L3 5 H12.5 L10.5 9.5 Z" fill="#fde6a6" stroke="#c98f2e" stroke-width="0.8"/><rect x="8.5" y="6" width="4.5" height="5.5" rx="0.8" fill="url(#gora)" stroke="#e08a00" stroke-width="0.6"/><rect x="9.6" y="7.2" width="1.1" height="3.5" fill="#ffe9a0"/></svg>
<div class="t tree" style="left:111.5px;top:443.83px;color:#222">annotation</div>
<svg class="abs" style="left:80.5px;top:460.5px" width="7" height="11" viewBox="0 0 7 11"><path d="M1.5 1 L6 5.5 L1.5 10 Z" fill="#fff" stroke="#2e2e2e" stroke-width="1.3" stroke-linejoin="miter"/></svg>
<svg class="abs" style="left:95.0px;top:461px" width="14" height="12" viewBox="0 0 14 12"><path d="M0.8 2 Q0.8 0.8 2 0.8 H5 L6.5 2.3 H11 Q11.8 2.3 11.8 3.2 V9.5 H0.8 Z" fill="url(#gyel)" stroke="#c98f2e" stroke-width="0.9"/><path d="M1 9.5 L3 5 H12.5 L10.5 9.5 Z" fill="#fde6a6" stroke="#c98f2e" stroke-width="0.8"/><rect x="8.5" y="6" width="4.5" height="5.5" rx="0.8" fill="url(#gora)" stroke="#e08a00" stroke-width="0.6"/><rect x="9.6" y="7.2" width="1.1" height="3.5" fill="#ffe9a0"/></svg>
<div class="t tree" style="left:111.5px;top:461.83px;color:#222">aop</div>
<svg class="abs" style="left:80.5px;top:478.5px" width="7" height="11" viewBox="0 0 7 11"><path d="M1.5 1 L6 5.5 L1.5 10 Z" fill="#fff" stroke="#2e2e2e" stroke-width="1.3" stroke-linejoin="miter"/></svg>
<svg class="abs" style="left:95.0px;top:479px" width="14" height="12" viewBox="0 0 14 12"><path d="M1.8 2 Q1.8 0.8 3 0.8 H6 L7.5 2.3 H11 Q11.8 2.3 11.8 3.2 V9.5 H1.8 Z" fill="url(#gyel)" stroke="#c98f2e" stroke-width="0.9"/><path d="M2 9.5 L4 5 H12.5 L10.5 9.5 Z" fill="#fde6a6" stroke="#c98f2e" stroke-width="0.8"/><path d="M3 5.5 L6 11.5 H0 Z" fill="#f3bd3d" stroke="#c98a10" stroke-width="0.7"/><rect x="2.6" y="7.3" width="0.9" height="3" fill="#5a3a08"/><rect x="8.5" y="6" width="4.5" height="5.5" rx="0.8" fill="url(#gora)" stroke="#e08a00" stroke-width="0.6"/><rect x="9.6" y="7.2" width="1.1" height="3.5" fill="#ffe9a0"/></svg>
<div class="t tree" style="left:111.5px;top:479.83px;color:#222">api</div>
<svg class="abs" style="left:80.5px;top:496.5px" width="7" height="11" viewBox="0 0 7 11"><path d="M1.5 1 L6 5.5 L1.5 10 Z" fill="#fff" stroke="#2e2e2e" stroke-width="1.3" stroke-linejoin="miter"/></svg>
<svg class="abs" style="left:95.0px;top:497px" width="14" height="12" viewBox="0 0 14 12"><path d="M1.8 2 Q1.8 0.8 3 0.8 H6 L7.5 2.3 H11 Q11.8 2.3 11.8 3.2 V9.5 H1.8 Z" fill="url(#gyel)" stroke="#c98f2e" stroke-width="0.9"/><path d="M2 9.5 L4 5 H12.5 L10.5 9.5 Z" fill="#fde6a6" stroke="#c98f2e" stroke-width="0.8"/><path d="M3 5.5 L6 11.5 H0 Z" fill="#f3bd3d" stroke="#c98a10" stroke-width="0.7"/><rect x="2.6" y="7.3" width="0.9" height="3" fill="#5a3a08"/><rect x="8.5" y="6" width="4.5" height="5.5" rx="0.8" fill="url(#gora)" stroke="#e08a00" stroke-width="0.6"/><rect x="9.6" y="7.2" width="1.1" height="3.5" fill="#ffe9a0"/></svg>
<div class="t tree" style="left:111.5px;top:497.83px;color:#222">arden</div>
<svg class="abs" style="left:80.5px;top:514.5px" width="7" height="11" viewBox="0 0 7 11"><path d="M1.5 1 L6 5.5 L1.5 10 Z" fill="#fff" stroke="#2e2e2e" stroke-width="1.3" stroke-linejoin="miter"/></svg>
<svg class="abs" style="left:95.0px;top:515px" width="14" height="12" viewBox="0 0 14 12"><path d="M1.8 2 Q1.8 0.8 3 0.8 H6 L7.5 2.3 H11 Q11.8 2.3 11.8 3.2 V9.5 H1.8 Z" fill="url(#gyel)" stroke="#c98f2e" stroke-width="0.9"/><path d="M2 9.5 L4 5 H12.5 L10.5 9.5 Z" fill="#fde6a6" stroke="#c98f2e" stroke-width="0.8"/><path d="M3 5.5 L6 11.5 H0 Z" fill="#f3bd3d" stroke="#c98a10" stroke-width="0.7"/><rect x="2.6" y="7.3" width="0.9" height="3" fill="#5a3a08"/><rect x="8.5" y="6" width="4.5" height="5.5" rx="0.8" fill="url(#gora)" stroke="#e08a00" stroke-width="0.6"/><rect x="9.6" y="7.2" width="1.1" height="3.5" fill="#ffe9a0"/></svg>
<div class="t tree" style="left:111.5px;top:515.83px;color:#222">cohort</div>
<svg class="abs" style="left:80.5px;top:532.5px" width="7" height="11" viewBox="0 0 7 11"><path d="M1.5 1 L6 5.5 L1.5 10 Z" fill="#fff" stroke="#2e2e2e" stroke-width="1.3" stroke-linejoin="miter"/></svg>
<svg class="abs" style="left:95.0px;top:533px" width="14" height="12" viewBox="0 0 14 12"><path d="M1.8 2 Q1.8 0.8 3 0.8 H6 L7.5 2.3 H11 Q11.8 2.3 11.8 3.2 V9.5 H1.8 Z" fill="url(#gyel)" stroke="#c98f2e" stroke-width="0.9"/><path d="M2 9.5 L4 5 H12.5 L10.5 9.5 Z" fill="#fde6a6" stroke="#c98f2e" stroke-width="0.8"/><path d="M3 5.5 L6 11.5 H0 Z" fill="#f3bd3d" stroke="#c98a10" stroke-width="0.7"/><rect x="2.6" y="7.3" width="0.9" height="3" fill="#5a3a08"/><rect x="8.5" y="6" width="4.5" height="5.5" rx="0.8" fill="url(#gora)" stroke="#e08a00" stroke-width="0.6"/><rect x="9.6" y="7.2" width="1.1" height="3.5" fill="#ffe9a0"/></svg>
<div class="t tree" style="left:111.5px;top:533.83px;color:#222">hl7</div>
<svg class="abs" style="left:80.5px;top:550.5px" width="7" height="11" viewBox="0 0 7 11"><path d="M1.5 1 L6 5.5 L1.5 10 Z" fill="#fff" stroke="#2e2e2e" stroke-width="1.3" stroke-linejoin="miter"/></svg>
<svg class="abs" style="left:95.0px;top:551px" width="14" height="12" viewBox="0 0 14 12"><path d="M1.8 2 Q1.8 0.8 3 0.8 H6 L7.5 2.3 H11 Q11.8 2.3 11.8 3.2 V9.5 H1.8 Z" fill="url(#gyel)" stroke="#c98f2e" stroke-width="0.9"/><path d="M2 9.5 L4 5 H12.5 L10.5 9.5 Z" fill="#fde6a6" stroke="#c98f2e" stroke-width="0.8"/><path d="M3 5.5 L6 11.5 H0 Z" fill="#f3bd3d" stroke="#c98a10" stroke-width="0.7"/><rect x="2.6" y="7.3" width="0.9" height="3" fill="#5a3a08"/><rect x="8.5" y="6" width="4.5" height="5.5" rx="0.8" fill="url(#gora)" stroke="#e08a00" stroke-width="0.6"/><rect x="9.6" y="7.2" width="1.1" height="3.5" fill="#ffe9a0"/></svg>
<div class="t tree" style="left:111.5px;top:551.83px;color:#222">logic</div>
<svg class="abs" style="left:80.5px;top:568.5px" width="7" height="11" viewBox="0 0 7 11"><path d="M1.5 1 L6 5.5 L1.5 10 Z" fill="#fff" stroke="#2e2e2e" stroke-width="1.3" stroke-linejoin="miter"/></svg>
<svg class="abs" style="left:95.0px;top:569px" width="14" height="12" viewBox="0 0 14 12"><path d="M1.8 2 Q1.8 0.8 3 0.8 H6 L7.5 2.3 H11 Q11.8 2.3 11.8 3.2 V9.5 H1.8 Z" fill="url(#gyel)" stroke="#c98f2e" stroke-width="0.9"/><path d="M2 9.5 L4 5 H12.5 L10.5 9.5 Z" fill="#fde6a6" stroke="#c98f2e" stroke-width="0.8"/><path d="M3 5.5 L6 11.5 H0 Z" fill="#f3bd3d" stroke="#c98a10" stroke-width="0.7"/><rect x="2.6" y="7.3" width="0.9" height="3" fill="#5a3a08"/><rect x="8.5" y="6" width="4.5" height="5.5" rx="0.8" fill="url(#gora)" stroke="#e08a00" stroke-width="0.6"/><rect x="9.6" y="7.2" width="1.1" height="3.5" fill="#ffe9a0"/></svg>
<div class="t tree" style="left:111.5px;top:569.83px;color:#222">messagesource</div>
<svg class="abs" style="left:80.5px;top:586.5px" width="7" height="11" viewBox="0 0 7 11"><path d="M1.5 1 L6 5.5 L1.5 10 Z" fill="#fff" stroke="#2e2e2e" stroke-width="1.3" stroke-linejoin="miter"/></svg>
<svg class="abs" style="left:95.0px;top:587px" width="14" height="12" viewBox="0 0 14 12"><path d="M1.8 2 Q1.8 0.8 3 0.8 H6 L7.5 2.3 H11 Q11.8 2.3 11.8 3.2 V9.5 H1.8 Z" fill="url(#gyel)" stroke="#c98f2e" stroke-width="0.9"/><path d="M2 9.5 L4 5 H12.5 L10.5 9.5 Z" fill="#fde6a6" stroke="#c98f2e" stroke-width="0.8"/><path d="M3 5.5 L6 11.5 H0 Z" fill="#f3bd3d" stroke="#c98a10" stroke-width="0.7"/><rect x="2.6" y="7.3" width="0.9" height="3" fill="#5a3a08"/><rect x="8.5" y="6" width="4.5" height="5.5" rx="0.8" fill="url(#gora)" stroke="#e08a00" stroke-width="0.6"/><rect x="9.6" y="7.2" width="1.1" height="3.5" fill="#ffe9a0"/></svg>
<div class="t tree" style="left:111.5px;top:587.83px;color:#222">migration</div>
<svg class="abs" style="left:80.5px;top:604.5px" width="7" height="11" viewBox="0 0 7 11"><path d="M1.5 1 L6 5.5 L1.5 10 Z" fill="#fff" stroke="#2e2e2e" stroke-width="1.3" stroke-linejoin="miter"/></svg>
<svg class="abs" style="left:95.0px;top:605px" width="14" height="12" viewBox="0 0 14 12"><path d="M1.8 2 Q1.8 0.8 3 0.8 H6 L7.5 2.3 H11 Q11.8 2.3 11.8 3.2 V9.5 H1.8 Z" fill="url(#gyel)" stroke="#c98f2e" stroke-width="0.9"/><path d="M2 9.5 L4 5 H12.5 L10.5 9.5 Z" fill="#fde6a6" stroke="#c98f2e" stroke-width="0.8"/><path d="M3 5.5 L6 11.5 H0 Z" fill="#f3bd3d" stroke="#c98a10" stroke-width="0.7"/><rect x="2.6" y="7.3" width="0.9" height="3" fill="#5a3a08"/><rect x="8.5" y="6" width="4.5" height="5.5" rx="0.8" fill="url(#gora)" stroke="#e08a00" stroke-width="0.6"/><rect x="9.6" y="7.2" width="1.1" height="3.5" fill="#ffe9a0"/></svg>
<div class="t tree" style="left:111.5px;top:605.83px;color:#222">module</div>
<svg class="abs" style="left:79.0px;top:624.5px" width="11" height="7" viewBox="0 0 11 7"><path d="M1 1.5 L10 1.5 L5.5 6 Z" fill="#fff" stroke="#2e2e2e" stroke-width="1.3"/></svg>
<svg class="abs" style="left:95.0px;top:623px" width="14" height="12" viewBox="0 0 14 12"><path d="M1.8 2 Q1.8 0.8 3 0.8 H6 L7.5 2.3 H11 Q11.8 2.3 11.8 3.2 V9.5 H1.8 Z" fill="url(#gyel)" stroke="#c98f2e" stroke-width="0.9"/><path d="M2 9.5 L4 5 H12.5 L10.5 9.5 Z" fill="#fde6a6" stroke="#c98f2e" stroke-width="0.8"/><path d="M3 5.5 L6 11.5 H0 Z" fill="#f3bd3d" stroke="#c98a10" stroke-width="0.7"/><rect x="2.6" y="7.3" width="0.9" height="3" fill="#5a3a08"/><rect x="8.5" y="6" width="4.5" height="5.5" rx="0.8" fill="url(#gora)" stroke="#e08a00" stroke-width="0.6"/><rect x="9.6" y="7.2" width="1.1" height="3.5" fill="#ffe9a0"/></svg>
<div class="t tree" style="left:111.5px;top:623.83px;color:#222">notification</div>
<svg class="abs" style="left:96.0px;top:640.5px" width="7" height="11" viewBox="0 0 7 11"><path d="M1.5 1 L6 5.5 L1.5 10 Z" fill="#fff" stroke="#2e2e2e" stroke-width="1.3" stroke-linejoin="miter"/></svg>
<svg class="abs" style="left:110.5px;top:641px" width="14" height="12" viewBox="0 0 14 12"><path d="M0.8 2 Q0.8 0.8 2 0.8 H5 L6.5 2.3 H11 Q11.8 2.3 11.8 3.2 V9.5 H0.8 Z" fill="url(#gyel)" stroke="#c98f2e" stroke-width="0.9"/><path d="M1 9.5 L3 5 H12.5 L10.5 9.5 Z" fill="#fde6a6" stroke="#c98f2e" stroke-width="0.8"/><rect x="8.5" y="6" width="4.5" height="5.5" rx="0.8" fill="url(#gora)" stroke="#e08a00" stroke-width="0.6"/><rect x="9.6" y="7.2" width="1.1" height="3.5" fill="#ffe9a0"/></svg>
<div class="t tree" style="left:127.0px;top:641.83px;color:#222">db</div>
<svg class="abs" style="left:96.0px;top:658.5px" width="7" height="11" viewBox="0 0 7 11"><path d="M1.5 1 L6 5.5 L1.5 10 Z" fill="#fff" stroke="#2e2e2e" stroke-width="1.3" stroke-linejoin="miter"/></svg>
<svg class="abs" style="left:110.5px;top:659px" width="14" height="12" viewBox="0 0 14 12"><path d="M1.8 2 Q1.8 0.8 3 0.8 H6 L7.5 2.3 H11 Q11.8 2.3 11.8 3.2 V9.5 H1.8 Z" fill="url(#gyel)" stroke="#c98f2e" stroke-width="0.9"/><path d="M2 9.5 L4 5 H12.5 L10.5 9.5 Z" fill="#fde6a6" stroke="#c98f2e" stroke-width="0.8"/><path d="M3 5.5 L6 11.5 H0 Z" fill="#f3bd3d" stroke="#c98a10" stroke-width="0.7"/><rect x="2.6" y="7.3" width="0.9" height="3" fill="#5a3a08"/><rect x="8.5" y="6" width="4.5" height="5.5" rx="0.8" fill="url(#gora)" stroke="#e08a00" stroke-width="0.6"/><rect x="9.6" y="7.2" width="1.1" height="3.5" fill="#ffe9a0"/></svg>
<div class="t tree" style="left:127.0px;top:659.83px;color:#222">impl</div>
<svg class="abs" style="left:96.0px;top:676.5px" width="7" height="11" viewBox="0 0 7 11"><path d="M1.5 1 L6 5.5 L1.5 10 Z" fill="#fff" stroke="#2e2e2e" stroke-width="1.3" stroke-linejoin="miter"/></svg>
<svg class="abs" style="left:110.5px;top:677px" width="14" height="12" viewBox="0 0 14 12"><path d="M0.8 2 Q0.8 0.8 2 0.8 H5 L6.5 2.3 H11 Q11.8 2.3 11.8 3.2 V9.5 H0.8 Z" fill="url(#gyel)" stroke="#c98f2e" stroke-width="0.9"/><path d="M1 9.5 L3 5 H12.5 L10.5 9.5 Z" fill="#fde6a6" stroke="#c98f2e" stroke-width="0.8"/><rect x="8.5" y="6" width="4.5" height="5.5" rx="0.8" fill="url(#gora)" stroke="#e08a00" stroke-width="0.6"/><rect x="9.6" y="7.2" width="1.1" height="3.5" fill="#ffe9a0"/></svg>
<div class="t tree" style="left:127.0px;top:677.83px;color:#222">mail</div>
<svg class="abs" style="left:111.5px;top:696px" width="12" height="14" viewBox="0 0 12 14"><path d="M0.7 0.7 H7 L9.8 3.5 V12.3 H0.7 Z" fill="#f4f8ff" stroke="#b5954a" stroke-width="0.9"/><path d="M5.5 3 V8.5 Q5.5 10.5 3 10" fill="none" stroke="#3a78c0" stroke-width="1.3"/><rect x="7" y="7.5" width="4.5" height="6" rx="0.8" fill="url(#gora)" stroke="#e08a00" stroke-width="0.6"/></svg>
<div class="t tree" style="left:127.0px;top:695.83px;color:#222">Alert.java 5387  8/28/08 12:03 PM  tmdugan</div>
<svg class="abs" style="left:111.5px;top:714px" width="12" height="14" viewBox="0 0 12 14"><path d="M0.7 0.7 H7 L9.8 3.5 V12.3 H0.7 Z" fill="#f4f8ff" stroke="#b5954a" stroke-width="0.9"/><path d="M5.5 3 V8.5 Q5.5 10.5 3 10" fill="none" stroke="#3a78c0" stroke-width="1.3"/><rect x="7" y="7.5" width="4.5" height="6" rx="0.8" fill="url(#gora)" stroke="#e08a00" stroke-width="0.6"/></svg>
<div class="t tree" style="left:127.0px;top:713.83px;color:#222">AlertRecipient.java 4941  7/15/08 1:27 PM  tmdugan</div>
</div>
<div class="abs" style="left:320px;top:109px;width:15px;height:723px;background:#dcdcdc;border:1px solid #a9a9a9"></div>
<div class="abs" style="left:323px;top:180px;width:10px;height:172px;background:linear-gradient(90deg,#92bdf0,#5f92d0);border:1px solid #4f7fb8;border-radius:1px"></div>
<div class="abs" style="left:6px;top:832px;width:314px;height:15px;background:#dcdcdc;border:1px solid #a9a9a9"></div>
<div class="abs" style="left:18px;top:835px;width:173px;height:10px;background:linear-gradient(#92bdf0,#5f92d0);border:1px solid #4f7fb8;border-radius:1px"></div>
<div class="abs" style="left:340px;top:80px;width:857px;height:568px;border:1px solid #a6a6a6;border-radius:5px 5px 0 0;background:#d8d8d8"></div>
<div class="abs" style="left:341px;top:81px;width:855px;height:27px;border-bottom:1px solid #a0a0a0;border-radius:4px 4px 0 0;background:#d6d6d6"></div>
<div class="abs" style="left:341px;top:81px;width:95px;height:27px;border-right:1px solid #a8a8a8;border-radius:4px 0 0 0;background:#fff"></div>
<div class="t" style="left:361px;top:90px;font-size:9.5px;color:#1a1a1a">Context.java</div>
<div class="abs" style="left:341px;top:108px;width:855px;height:539px;background:#fff"></div>
<div class="abs" style="left:343px;top:110px;width:10px;height:519px;background:#d8d8d8"></div>
<div class="abs" style="left:381px;top:110px;width:1px;height:519px;background:#e6e6e6"></div>
<svg class="abs" style="left:343px;top:88px" width="14" height="15" viewBox="0 0 14 15"><path d="M3.7 0.7 H10 L12.8 3.5 V12.3 H3.7 Z" fill="#f4f8ff" stroke="#b5954a" stroke-width="0.9"/><path d="M8.5 3 V8.5 Q8.5 10.5 6 10" fill="none" stroke="#3a78c0" stroke-width="1.3"/><path d="M3 8 L6 14 H0 Z" fill="#f3bd3d" stroke="#c98a10" stroke-width="0.7"/><rect x="2.6" y="10" width="0.9" height="2.5" fill="#5a3a08"/></svg>
<svg class="abs" style="left:421px;top:89px" width="10" height="10" viewBox="0 0 10 10"><path d="M1.5 1.5 L8.5 8.5 M8.5 1.5 L1.5 8.5" stroke="#1a1a1a" stroke-width="3" stroke-linecap="square"/><path d="M1.5 1.5 L8.5 8.5 M8.5 1.5 L1.5 8.5" stroke="#fff" stroke-width="1.2" stroke-linecap="square"/></svg>
<svg class="abs" style="left:1166px;top:88px" width="10" height="6" viewBox="0 0 10 6"><rect x="0.75" y="0.75" width="8.5" height="3.5" rx="0.8" fill="#fff" stroke="#1a1a1a" stroke-width="1.5"/></svg><svg class="abs" style="left:1182px;top:88px" width="10" height="10" viewBox="0 0 10 10"><rect x="0.75" y="0.75" width="8.5" height="8.5" rx="0.6" fill="#fff" stroke="#1a1a1a" stroke-width="1.5"/><path d="M0.75 3 H9.25" stroke="#1a1a1a" stroke-width="1.5"/></svg>
<div class="abs" style="left:382px;top:109px;width:786px;height:520px;overflow:hidden;background:#fff">
<div class="abs code" style="left:0;top:0;width:2000px">
<div class="t" style="left:0;top:-4.75px"><span class="d"> * </span></div>
<div class="t" style="left:0;top:9.82px"><span class="d"> * </span><span class="dt">@see</span><span class="d"> org.openmrs.api.context.UserContext</span></div>
<div class="t" style="left:0;top:24.39px"><span class="d"> * </span><span class="dt">@see</span><span class="d"> org.openmrs.api.context.ServiceContext</span></div>
<div class="t" style="left:0;top:38.96px"><span class="d"> */</span></div>
<div class="t" style="left:0;top:53.53px"><span class="k">public</span> <span class="k">class</span> Context {</div>
<div class="t" style="left:0;top:68.10px"></div>
<div class="t" style="left:0;top:82.67px">    <span class="k">private</span> <span class="k">static</span> <span class="k">final</span> Log <span class="f">log</span> = LogFactory.<i>getLog</i>(Context.<span class="k">class</span>);</div>
<div class="t" style="left:0;top:97.24px"></div>
<div class="t" style="left:0;top:111.81px">    <span class="c">// Global resources</span></div>
<div class="t" style="left:0;top:126.38px">    <span class="k">private</span> <span class="k">static</span> ContextDAO <span class="f">contextDAO</span>;</div>
<div class="t" style="left:0;top:140.95px">    <span class="k">private</span> <span class="k">static</span> Session <span class="f">mailSession</span>;</div>
<div class="t" style="left:0;top:155.52px"></div>
<div class="t" style="left:0;top:170.09px">    <span class="c">// Using "wrapper" (Object array) around UserContext to avoid ThreadLocal bug in Java 1.5</span></div>
<div class="t" style="left:0;top:184.66px">    <span class="k">private</span> <span class="k">static</span> <span class="k">final</span> ThreadLocal&lt;Object[] <span class="c">/*UserContext */</span>&gt; <span class="f">userContextHolder</span> = <span class="k">new</span> ThreadLocal&lt;Object[] <span class="c">/*UserContext */</span>&gt;();</div>
<div class="t" style="left:0;top:199.23px">    <span class="k">private</span> <span class="k">static</span> ServiceContext <span class="f">serviceContext</span>;</div>
<div class="t" style="left:0;top:213.80px">    <span class="k">private</span> <span class="k">static</span> Properties <span class="f">runtimeProperties</span> = <span class="k">new</span> Properties();</div>
<div class="t" style="left:0;top:228.37px"></div>
<div class="t" style="left:0;top:242.94px">    <span class="c">// A place to store data that will persist longer than a session, but won't persist beyond application restart</span></div>
<div class="t" style="left:0;top:257.51px">    <span class="c">// </span><b class="dt">TODO</b><span class="c">: put an optional expire date on these items</span></div>
<div class="t" style="left:0;top:272.08px">    <span class="k">private</span> <span class="k">static</span> Map&lt;User, Map&lt;String, Object&gt;&gt; <span class="f">volatileUserData</span> = <span class="k">new</span> HashMap&lt;User, Map&lt;String, Object&gt;&gt;();</div>
<div class="t" style="left:0;top:286.65px"></div>
<div class="t" style="left:0;top:301.22px">    <span class="d">/**</span></div>
<div class="t" style="left:0;top:315.79px">    <span class="d"> * Default public constructor</span></div>
<div class="t" style="left:0;top:330.36px">    <span class="d"> * </span></div>
<div class="t" style="left:0;top:344.93px">    <span class="d"> */</span></div>
<div class="t" style="left:0;top:359.50px">    <span class="k">public</span> Context() { }</div>
<div class="t" style="left:0;top:374.07px"></div>
<div class="t" style="left:0;top:388.64px">    <span class="d">/**</span></div>
<div class="t" style="left:0;top:403.21px">    <span class="d"> * Gets the context's data access object</span></div>
<div class="t" style="left:0;top:417.78px">    <span class="d"> * </span></div>
<div class="t" style="left:0;top:432.35px">    <span class="d"> * </span><span class="dt">@return</span><span class="d"> ContextDAO</span></div>
<div class="t" style="left:0;top:446.92px">    <span class="d"> */</span></div>
<div class="t" style="left:0;top:461.49px">    <span class="k">private</span> <span class="k">static</span> ContextDAO getContextDAO() {</div>
<div class="t" style="left:0;top:476.06px">        <span class="k">if</span> (<span class="f">contextDAO</span> == <span class="k">null</span>) <span class="k">throw</span> <span class="k">new</span> APIException(<span class="s">"contextDAO is null"</span>);</div>
<div class="t" style="left:0;top:490.63px">        <span class="k">return</span> <span class="f">contextDAO</span>;</div>
<div class="t" style="left:0;top:505.20px">    }</div>
<div class="t" style="left:0;top:519.77px"></div>
</div></div>
<div class="abs" style="left:353px;top:109px;width:28px;height:519px;overflow:hidden;background:#fff">
<div class="t code ln" style="right:7px;top:-4.75px">80</div>
<div class="t code ln" style="right:7px;top:9.82px">81</div>
<div class="t code ln" style="right:7px;top:24.39px">82</div>
<div class="t code ln" style="right:7px;top:38.96px">83</div>
<div class="t code ln" style="right:7px;top:53.53px">84</div>
<div class="t code ln" style="right:7px;top:68.10px">85</div>
<div class="t code ln" style="right:7px;top:82.67px">86</div>
<div class="t code ln" style="right:7px;top:97.24px">87</div>
<div class="t code ln" style="right:7px;top:111.81px">88</div>
<div class="t code ln" style="right:7px;top:126.38px">89</div>
<div class="t code ln" style="right:7px;top:140.95px">90</div>
<div class="t code ln" style="right:7px;top:155.52px">91</div>
<div class="t code ln" style="right:7px;top:170.09px">92</div>
<div class="t code ln" style="right:7px;top:184.66px">93</div>
<div class="t code ln" style="right:7px;top:199.23px">94</div>
<div class="t code ln" style="right:7px;top:213.80px">95</div>
<div class="t code ln" style="right:7px;top:228.37px">96</div>
<div class="t code ln" style="right:7px;top:242.94px">97</div>
<div class="t code ln" style="right:7px;top:257.51px">98</div>
<div class="t code ln" style="right:7px;top:272.08px">99</div>
<div class="t code ln" style="right:7px;top:286.65px">100</div>
<div class="t code ln" style="right:7px;top:301.22px">101</div>
<div class="t code ln" style="right:7px;top:315.79px">102</div>
<div class="t code ln" style="right:7px;top:330.36px">103</div>
<div class="t code ln" style="right:7px;top:344.93px">104</div>
<div class="t code ln" style="right:7px;top:359.50px">105</div>
<div class="t code ln" style="right:7px;top:374.07px">106</div>
<div class="t code ln" style="right:7px;top:388.64px">107</div>
<div class="t code ln" style="right:7px;top:403.21px">108</div>
<div class="t code ln" style="right:7px;top:417.78px">109</div>
<div class="t code ln" style="right:7px;top:432.35px">110</div>
<div class="t code ln" style="right:7px;top:446.92px">111</div>
<div class="t code ln" style="right:7px;top:461.49px">112</div>
<div class="t code ln" style="right:7px;top:476.06px">113</div>
<div class="t code ln" style="right:7px;top:490.63px">114</div>
<div class="t code ln" style="right:7px;top:505.20px">115</div>
<div class="t code ln" style="right:7px;top:519.77px">116</div>
</div>
<svg class="abs" style="left:343px;top:363px" width="11" height="14" viewBox="0 0 11 14"><rect x="0.7" y="2" width="9.3" height="11.3" rx="0.8" fill="#eef3fb" stroke="#b8904a" stroke-width="0.8"/><rect x="3" y="0.5" width="5" height="2.5" rx="0.6" fill="#8a9ab0"/><path d="M1 8 L3.5 10.5 L8.5 4.5" fill="none" stroke="#1a5ac8" stroke-width="1.8"/></svg>
<svg class="abs" style="left:374px;top:411.0px" width="8" height="8" viewBox="0 0 8 8"><circle cx="4" cy="4" r="3.4" fill="#e6eef6" stroke="#b8c8d8" stroke-width="0.8"/><path d="M2 4 H6" stroke="#7a8aa0" stroke-width="1"/></svg>
<svg class="abs" style="left:374px;top:498.41999999999996px" width="8" height="8" viewBox="0 0 8 8"><circle cx="4" cy="4" r="3.4" fill="#e6eef6" stroke="#b8c8d8" stroke-width="0.8"/><path d="M2 4 H6" stroke="#7a8aa0" stroke-width="1"/></svg>
<svg class="abs" style="left:374px;top:571.27px" width="8" height="8" viewBox="0 0 8 8"><circle cx="4" cy="4" r="3.4" fill="#e6eef6" stroke="#b8c8d8" stroke-width="0.8"/><path d="M2 4 H6" stroke="#7a8aa0" stroke-width="1"/></svg>
<div class="abs" style="left:1168px;top:110px;width:15px;height:520px;background:#dcdcdc;border:1px solid #a9a9a9"></div>
<div class="abs" style="left:1171px;top:167px;width:10px;height:26px;background:linear-gradient(90deg,#92bdf0,#5f92d0);border:1px solid #4f7fb8;border-radius:1px"></div>
<div class="abs" style="left:1183px;top:110px;width:12px;height:520px;background:#d6d6d6"></div>
<div class="abs" style="left:1184px;top:182px;width:8px;height:4px;border:1px solid #7fb2ee;background:#dde6f0"></div>
<div class="abs" style="left:1184px;top:208px;width:8px;height:4px;border:1px solid #7fb2ee;background:#dde6f0"></div>
<div class="abs" style="left:1184px;top:396px;width:8px;height:4px;border:1px solid #7fb2ee;background:#dde6f0"></div>
<div class="abs" style="left:1184px;top:402px;width:8px;height:4px;border:1px solid #7fb2ee;background:#dde6f0"></div>
<div class="abs" style="left:1184px;top:489px;width:8px;height:4px;border:1px solid #7fb2ee;background:#dde6f0"></div>
<div class="abs" style="left:1184px;top:575px;width:8px;height:4px;border:1px solid #7fb2ee;background:#dde6f0"></div>
<div class="abs" style="left:1184px;top:587px;width:8px;height:4px;border:1px solid #7fb2ee;background:#dde6f0"></div>
<div class="abs" style="left:1184px;top:591px;width:8px;height:4px;border:1px solid #7fb2ee;background:#dde6f0"></div>
<div class="abs" style="left:382px;top:631px;width:786px;height:15px;background:#dcdcdc;border:1px solid #a9a9a9"></div>
<div class="abs" style="left:395px;top:633px;width:678px;height:11px;background:linear-gradient(#92bdf0,#5f92d0);border:1px solid #4f7fb8;border-radius:1px"></div>
<div class="abs" style="left:1168px;top:630px;width:27px;height:16px;background:#d6d6d6"></div>
<div class="abs" style="left:343px;top:629px;width:39px;height:17px;background:#d6d6d6"></div>
<div class="abs" style="left:340px;top:650px;width:857px;height:200px;border:1px solid #a6a6a6;border-radius:5px 5px 0 0;background:#d8d8d8"></div>
<div class="abs" style="left:341px;top:651px;width:855px;height:27px;border-bottom:1px solid #a0a0a0;border-radius:4px 4px 0 0;background:#d6d6d6"></div>
<div class="abs" style="left:341px;top:651px;width:63px;height:27px;border-right:1px solid #b0b0b0;background:#d9d9d9"></div>
<div class="t" style="left:361px;top:660px;font-size:9.4px;color:#1a1a1a;transform:scaleY(1.2);transform-origin:0 8px">Problems</div>
<div class="abs" style="left:404px;top:651px;width:57px;height:27px;border-right:1px solid #b0b0b0;background:#d9d9d9"></div>
<div class="t" style="left:424px;top:660px;font-size:9.4px;color:#1a1a1a;transform:scaleY(1.2);transform-origin:0 8px">Javadoc</div>
<div class="abs" style="left:461px;top:651px;width:58px;height:27px;border-right:1px solid #b0b0b0;background:#d9d9d9"></div>
<div class="t" style="left:481px;top:660px;font-size:9.4px;color:#1a1a1a;transform:scaleY(1.2);transform-origin:0 8px">Console</div>
<div class="abs" style="left:519px;top:651px;width:57px;height:27px;border-right:1px solid #b0b0b0;background:linear-gradient(#e3ebf5,#87a8d2)"></div>
<div class="t" style="left:539px;top:660px;font-size:9.4px;color:#1a1a1a;transform:scaleY(1.2);transform-origin:0 8px">Ant</div>
<div class="abs" style="left:576px;top:651px;width:56px;height:27px;border-right:1px solid #b0b0b0;background:#d9d9d9"></div>
<div class="t" style="left:597px;top:660px;font-size:9.4px;color:#1a1a1a;transform:scaleY(1.2);transform-origin:0 8px">History</div>
<div class="abs" style="left:341px;top:678px;width:855px;height:171px;border:2px solid #8eb0da;background:#fff"></div>
<div class="abs" style="left:342px;top:680px;width:838px;height:167px;overflow:hidden">
<svg class="abs" style="left:2px;top:5px" width="11" height="7" viewBox="0 0 11 7"><path d="M1 1.5 L10 1.5 L5.5 6 Z" fill="#fff" stroke="#2e2e2e" stroke-width="1.3"/></svg>
<svg class="abs" style="left:19px;top:1px" width="14" height="15" viewBox="0 0 14 15"><path d="M3.5 0.7 H10 L12.8 3.5 V13.3 H3.5 Z" fill="#f8f4e8" stroke="#c8a050" stroke-width="0.9"/><path d="M1 5 L4 7 M10 5 L7 7 M0.5 9 H4 M10.5 9 H7 M1 13 L4 11 M10 13 L7 11" stroke="#333" stroke-width="0.9"/><circle cx="5.5" cy="5" r="1.6" fill="#666"/><ellipse cx="5.5" cy="9.5" rx="2.2" ry="3" fill="#777" stroke="#333" stroke-width="0.5"/></svg>
<div class="t tree" style="left:34px;top:3.53px">OpenMRS-logic</div>
<svg class="abs" style="left:19.5px;top:21px" width="7" height="11" viewBox="0 0 7 11"><path d="M1.5 1 L6 5.5 L1.5 10 Z" fill="#fff" stroke="#2e2e2e" stroke-width="1.3" stroke-linejoin="miter"/></svg>
<svg class="abs" style="left:35px;top:21px" width="12" height="12" viewBox="0 0 12 12"><circle cx="6" cy="6" r="5.2" fill="#fff" stroke="#3da35a" stroke-width="1.1"/><circle cx="6" cy="6" r="3.2" fill="#fff" stroke="#3da35a" stroke-width="0.9"/><circle cx="6" cy="6" r="1.6" fill="#1a7a30"/></svg>
<div class="t tree" style="left:50px;top:21.53px">arden-clean-grammar</div>
<svg class="abs" style="left:19.5px;top:39px" width="7" height="11" viewBox="0 0 7 11"><path d="M1.5 1 L6 5.5 L1.5 10 Z" fill="#fff" stroke="#2e2e2e" stroke-width="1.3" stroke-linejoin="miter"/></svg>
<svg class="abs" style="left:35px;top:39px" width="12" height="12" viewBox="0 0 12 12"><circle cx="6" cy="6" r="5.2" fill="#fff" stroke="#3da35a" stroke-width="1.1"/><circle cx="6" cy="6" r="3.2" fill="#fff" stroke="#3da35a" stroke-width="0.9"/><circle cx="6" cy="6" r="1.6" fill="#1a7a30"/></svg>
<div class="t tree" style="left:50px;top:39.53px">arden-make-antlr</div>
<svg class="abs" style="left:19.5px;top:57px" width="7" height="11" viewBox="0 0 7 11"><path d="M1.5 1 L6 5.5 L1.5 10 Z" fill="#fff" stroke="#2e2e2e" stroke-width="1.3" stroke-linejoin="miter"/></svg>
<svg class="abs" style="left:35px;top:57px" width="12" height="12" viewBox="0 0 12 12"><circle cx="6" cy="6" r="5.2" fill="#fff" stroke="#3da35a" stroke-width="1.1"/><circle cx="6" cy="6" r="3.2" fill="#fff" stroke="#3da35a" stroke-width="0.9"/><circle cx="6" cy="6" r="1.6" fill="#1a7a30"/></svg>
<div class="t tree" style="left:50px;top:57.53px">arden-tests</div>
<svg class="abs" style="left:19.5px;top:75px" width="7" height="11" viewBox="0 0 7 11"><path d="M1.5 1 L6 5.5 L1.5 10 Z" fill="#fff" stroke="#2e2e2e" stroke-width="1.3" stroke-linejoin="miter"/></svg>
<svg class="abs" style="left:35px;top:75px" width="12" height="12" viewBox="0 0 12 12"><circle cx="6" cy="6" r="5.5" fill="#4db36a"/><circle cx="6" cy="6" r="3.8" fill="#7fcf8f" stroke="#2a8a40" stroke-width="0.8"/><circle cx="6" cy="6" r="1.6" fill="#116622"/></svg>
<div class="t tree" style="left:50px;top:75.53px">clean</div>
<svg class="abs" style="left:19.5px;top:93px" width="7" height="11" viewBox="0 0 7 11"><path d="M1.5 1 L6 5.5 L1.5 10 Z" fill="#fff" stroke="#2e2e2e" stroke-width="1.3" stroke-linejoin="miter"/></svg>
<svg class="abs" style="left:35px;top:93px" width="12" height="12" viewBox="0 0 12 12"><circle cx="6" cy="6" r="5.5" fill="#4db36a"/><circle cx="6" cy="6" r="3.8" fill="#7fcf8f" stroke="#2a8a40" stroke-width="0.8"/><circle cx="6" cy="6" r="1.6" fill="#116622"/></svg>
<div class="t tree" style="left:50px;top:93.53px">compile-api</div>
<svg class="abs" style="left:19.5px;top:111px" width="7" height="11" viewBox="0 0 7 11"><path d="M1.5 1 L6 5.5 L1.5 10 Z" fill="#fff" stroke="#2e2e2e" stroke-width="1.3" stroke-linejoin="miter"/></svg>
<svg class="abs" style="left:35px;top:111px" width="12" height="12" viewBox="0 0 12 12"><circle cx="6" cy="6" r="5.5" fill="#4db36a"/><circle cx="6" cy="6" r="3.8" fill="#7fcf8f" stroke="#2a8a40" stroke-width="0.8"/><circle cx="6" cy="6" r="1.6" fill="#116622"/></svg>
<div class="t tree" style="left:50px;top:111.53px">compile-api-tests</div>
<svg class="abs" style="left:19.5px;top:129px" width="7" height="11" viewBox="0 0 7 11"><path d="M1.5 1 L6 5.5 L1.5 10 Z" fill="#fff" stroke="#2e2e2e" stroke-width="1.3" stroke-linejoin="miter"/></svg>
<svg class="abs" style="left:35px;top:129px" width="12" height="12" viewBox="0 0 12 12"><circle cx="6" cy="6" r="5.5" fill="#4db36a"/><circle cx="6" cy="6" r="3.8" fill="#7fcf8f" stroke="#2a8a40" stroke-width="0.8"/><circle cx="6" cy="6" r="1.6" fill="#116622"/></svg>
<div class="t tree" style="left:50px;top:129.53px">compile-web</div>
<svg class="abs" style="left:19.5px;top:147px" width="7" height="11" viewBox="0 0 7 11"><path d="M1.5 1 L6 5.5 L1.5 10 Z" fill="#fff" stroke="#2e2e2e" stroke-width="1.3" stroke-linejoin="miter"/></svg>
<svg class="abs" style="left:35px;top:147px" width="12" height="12" viewBox="0 0 12 12"><circle cx="6" cy="6" r="5.5" fill="#4db36a"/><circle cx="6" cy="6" r="3.8" fill="#7fcf8f" stroke="#2a8a40" stroke-width="0.8"/><circle cx="6" cy="6" r="1.6" fill="#116622"/></svg>
<div class="t tree" style="left:50px;top:147.53px">deploy</div>
<svg class="abs" style="left:19.5px;top:165px" width="7" height="11" viewBox="0 0 7 11"><path d="M1.5 1 L6 5.5 L1.5 10 Z" fill="#fff" stroke="#2e2e2e" stroke-width="1.3" stroke-linejoin="miter"/></svg>
<svg class="abs" style="left:35px;top:165px" width="12" height="12" viewBox="0 0 12 12"><circle cx="6" cy="6" r="5.5" fill="#4db36a"/><circle cx="6" cy="6" r="3.8" fill="#7fcf8f" stroke="#2a8a40" stroke-width="0.8"/><circle cx="6" cy="6" r="1.6" fill="#116622"/></svg>
<div class="t tree" style="left:50px;top:165.53px">deploy-web</div>
</div>
<div class="abs" style="left:1180px;top:680px;width:14px;height:167px;background:#dcdcdc;border:1px solid #a9a9a9"></div>
<div class="abs" style="left:1182px;top:692px;width:10px;height:30px;background:linear-gradient(90deg,#92bdf0,#5f92d0);border:1px solid #4f7fb8;border-radius:1px"></div>
<svg class="abs" style="left:343px;top:659px" width="14" height="15" viewBox="0 0 14 15"><rect x="1" y="1" width="11" height="12" fill="#f8f8f8" stroke="#8a8a8a" stroke-width="0.8"/><circle cx="4" cy="4.5" r="2.2" fill="#e03030"/><path d="M6 8 L9 13.5 H3 Z" fill="#f0b020"/></svg>
<svg class="abs" style="left:408px;top:660px" width="11" height="11" viewBox="0 0 11 11"><text x="5.5" y="9" font-family="Liberation Sans" font-size="11" fill="#3a6ab8" text-anchor="middle">@</text></svg>
<svg class="abs" style="left:465px;top:659px" width="14" height="13" viewBox="0 0 14 13"><rect x="0.5" y="0.5" width="12" height="9" fill="#fff" stroke="#2a5aa8" stroke-width="1.2"/><rect x="2" y="2" width="9" height="6" fill="#d8e6f8"/><rect x="3" y="10" width="7" height="2.5" fill="#2a5aa8"/></svg>
<svg class="abs" style="left:523px;top:659px" width="13" height="14" viewBox="0 0 13 14"><path d="M1 3 L4 5 M12 3 L9 5 M0.5 7.5 H4 M12.5 7.5 H9 M1 12 L4 10 M12 12 L9 10" stroke="#333" stroke-width="0.9"/><ellipse cx="6.5" cy="4" rx="2" ry="2" fill="#777"/><ellipse cx="6.5" cy="9" rx="2.5" ry="3.5" fill="#888" stroke="#333" stroke-width="0.6"/></svg>
<svg class="abs" style="left:564px;top:660px" width="10" height="10" viewBox="0 0 10 10"><path d="M1.5 1.5 L8.5 8.5 M8.5 1.5 L1.5 8.5" stroke="#1a1a1a" stroke-width="3" stroke-linecap="square"/><path d="M1.5 1.5 L8.5 8.5 M8.5 1.5 L1.5 8.5" stroke="#fff" stroke-width="1.2" stroke-linecap="square"/></svg>
<svg class="abs" style="left:580px;top:656px" width="13" height="16" viewBox="0 0 13 16"><rect x="5" y="0.8" width="6" height="9" rx="2" fill="#f8c020" stroke="#c89000" stroke-width="0.6"/><rect x="1" y="6" width="7" height="9" fill="#e8f0fb" stroke="#7a8ab8" stroke-width="0.8"/><path d="M2.5 9 H6.5 M2.5 11 H6.5 M2.5 13 H6.5" stroke="#4a6ab0" stroke-width="0.8"/></svg>
<svg class="abs" style="left:1022px;top:657px" width="15" height="15" viewBox="0 0 15 15"><path d="M5 4 L8 6 M13 4 L10 6 M4.5 8.5 H8 M14 8.5 H10.5 M5 13 L8 11 M13 13 L10 11" stroke="#333" stroke-width="0.8"/><ellipse cx="9.3" cy="3" rx="1.5" ry="1.5" fill="#777"/><ellipse cx="9.3" cy="9" rx="2" ry="3.2" fill="#888"/><path d="M0.5 9 H6 M3.2 6.2 V11.8" stroke="#2a9a3a" stroke-width="2"/></svg>
<svg class="abs" style="left:1045px;top:656px" width="16" height="16" viewBox="0 0 16 16"><path d="M9 2 L14 1 L15 6 L8 12 L4 8 Z" fill="#f2b844" stroke="#b8801a" stroke-width="0.8"/><path d="M4 8 L8 12 L5.5 14 L2 10.5 Z" fill="#8a8a8a"/><path d="M2 10.5 L5.5 14 L0.5 15 Z" fill="#fff6c0"/></svg>
<svg class="abs" style="left:1070px;top:657px" width="15" height="15" viewBox="0 0 15 15"><circle cx="7" cy="7.5" r="6" fill="#fff" stroke="#3aa05a" stroke-width="1.2"/><circle cx="7" cy="7.5" r="3.5" fill="#fff" stroke="#3aa05a" stroke-width="1"/><circle cx="7" cy="7.5" r="1.5" fill="#1a7a30"/><path d="M1 1 L14 14" stroke="#2a3aa8" stroke-width="1.2"/></svg>
<svg class="abs" style="left:1094px;top:657px" width="15" height="15" viewBox="0 0 15 15"><circle cx="7.5" cy="7.5" r="6.8" fill="url(#ggreen)" stroke="#2c8a34" stroke-width="0.6"/><path d="M5.5 4 L10.5 7.5 L5.5 11 Z" fill="#fff"/></svg>
<svg class="abs" style="left:1119px;top:659px" width="13" height="12" viewBox="0 0 13 12"><path d="M2 2 L11 10 M11 2 L2 10" stroke="#c8c8c8" stroke-width="3"/></svg>
<svg class="abs" style="left:1142px;top:657px" width="16" height="15" viewBox="0 0 16 15"><path d="M2 2 L10 10 M10 2 L2 10" stroke="#d0d0d0" stroke-width="2.6" fill="none"/><path d="M5 6 L14 14 M14 6 L5 14" stroke="#7a7a7a" stroke-width="3"/></svg>
<svg class="abs" style="left:1166px;top:658px" width="10" height="6" viewBox="0 0 10 6"><rect x="0.75" y="0.75" width="8.5" height="3.5" rx="0.8" fill="#fff" stroke="#1a1a1a" stroke-width="1.5"/></svg><svg class="abs" style="left:1182px;top:658px" width="10" height="10" viewBox="0 0 10 10"><rect x="0.75" y="0.75" width="8.5" height="8.5" rx="0.6" fill="#fff" stroke="#1a1a1a" stroke-width="1.5"/><path d="M0.75 3 H9.25" stroke="#1a1a1a" stroke-width="1.5"/></svg>
<svg class="abs" style="left:324px;top:115px" width="7" height="4" viewBox="0 0 7 4"><path d="M1 3.5 L3.5 1 L6 3.5" fill="none" stroke="#707070" stroke-width="1.4"/></svg>
<svg class="abs" style="left:324px;top:824px" width="7" height="4" viewBox="0 0 7 4"><path d="M1 0.5 L3.5 3 L6 0.5" fill="none" stroke="#707070" stroke-width="1.4"/></svg>
<svg class="abs" style="left:11px;top:836px" width="4" height="7" viewBox="0 0 4 7"><path d="M3.5 1 L1 3.5 L3.5 6" fill="none" stroke="#aaa" stroke-width="1.4"/></svg>
<svg class="abs" style="left:311px;top:836px" width="4" height="7" viewBox="0 0 4 7"><path d="M0.5 1 L3 3.5 L0.5 6" fill="none" stroke="#707070" stroke-width="1.4"/></svg>
<svg class="abs" style="left:1172px;top:115px" width="7" height="4" viewBox="0 0 7 4"><path d="M1 3.5 L3.5 1 L6 3.5" fill="none" stroke="#707070" stroke-width="1.4"/></svg>
<svg class="abs" style="left:1172px;top:621px" width="7" height="4" viewBox="0 0 7 4"><path d="M1 0.5 L3.5 3 L6 0.5" fill="none" stroke="#707070" stroke-width="1.4"/></svg>
<svg class="abs" style="left:385px;top:635px" width="4" height="7" viewBox="0 0 4 7"><path d="M3.5 1 L1 3.5 L3.5 6" fill="none" stroke="#aaa" stroke-width="1.4"/></svg>
<svg class="abs" style="left:1157px;top:635px" width="4" height="7" viewBox="0 0 4 7"><path d="M0.5 1 L3 3.5 L0.5 6" fill="none" stroke="#707070" stroke-width="1.4"/></svg>
<svg class="abs" style="left:1183.5px;top:685px" width="7" height="4" viewBox="0 0 7 4"><path d="M1 3.5 L3.5 1 L6 3.5" fill="none" stroke="#bbb" stroke-width="1.4"/></svg>
<svg class="abs" style="left:1184px;top:838px" width="7" height="4" viewBox="0 0 7 4"><path d="M1 0.5 L3.5 3 L6 0.5" fill="none" stroke="#707070" stroke-width="1.4"/></svg>
<svg class="abs" style="left:466px;top:524px" width="13" height="19" viewBox="0 0 13 19"><path d="M1.5 1 V16 L5 12.5 L7.5 17.5 L9.5 16.5 L7.2 11.5 H11 Z" fill="#fff" stroke="#111" stroke-width="1.3" stroke-linejoin="round"/></svg>
<div class="abs" style="left:328px;top:263px;width:1px;height:1px;background:#3a5a88"></div><div class="abs" style="left:328px;top:266px;width:1px;height:1px;background:#3a5a88"></div><div class="abs" style="left:328px;top:269px;width:1px;height:1px;background:#3a5a88"></div>
<div class="abs" style="left:1176px;top:177px;width:1px;height:1px;background:#3a5a88"></div><div class="abs" style="left:1176px;top:180px;width:1px;height:1px;background:#3a5a88"></div><div class="abs" style="left:1176px;top:183px;width:1px;height:1px;background:#3a5a88"></div>
<div class="abs" style="left:1187px;top:704px;width:1px;height:1px;background:#3a5a88"></div><div class="abs" style="left:1187px;top:707px;width:1px;height:1px;background:#3a5a88"></div><div class="abs" style="left:1187px;top:710px;width:1px;height:1px;background:#3a5a88"></div>
<div class="abs" style="left:101px;top:840px;width:1px;height:1px;background:#3a5a88"></div><div class="abs" style="left:104px;top:840px;width:1px;height:1px;background:#3a5a88"></div><div class="abs" style="left:107px;top:840px;width:1px;height:1px;background:#3a5a88"></div>
<div class="abs" style="left:731px;top:638px;width:1px;height:1px;background:#3a5a88"></div><div class="abs" style="left:734px;top:638px;width:1px;height:1px;background:#3a5a88"></div><div class="abs" style="left:737px;top:638px;width:1px;height:1px;background:#3a5a88"></div>
<div class="sep" style="left:7px;top:853px;height:22px"></div>
<div class="t" style="left:79px;top:859px;color:#1a1a1a">depends="junit" description="Run tests and create JUnit report (requires driver.jar property)"</div>
<div class="sep" style="left:979px;top:853px;height:22px"></div>
<svg class="abs" style="left:21px;top:857px" width="15" height="14" viewBox="0 0 15 14"><rect x="1" y="3" width="6" height="10" fill="#e8f4fc" stroke="#b0a070" stroke-width="0.7"/><rect x="1" y="3" width="6" height="2.2" fill="#5a90d0"/><path d="M10.5 0.5 L13.5 3.5 L10.5 6.5 L7.5 3.5 Z" fill="#f8d860" stroke="#c89a10" stroke-width="0.7"/></svg>
<div class="abs" style="left:0;top:878px;width:1200px;height:22px;background:linear-gradient(#3e3e3e,#2e2e2e)"></div>
<div class="t" style="left:32px;top:884px;color:#eee;font-size:9.5px;font-weight:bold;letter-spacing:0.4px">Applications</div>
<div class="t" style="left:107px;top:884px;color:#eee;font-size:9.5px;font-weight:bold;letter-spacing:0.4px">Places</div>
<div class="t" style="left:153px;top:884px;color:#eee;font-size:9.5px;font-weight:bold;letter-spacing:0.4px">System</div>
<div class="tb" style="left:206px;width:82px;background:#3a3a3a"></div>
<div class="t" style="left:232px;top:885px;color:#dcdcdc;font-size:9.5px">XChat: bw...</div>
<div class="tb" style="left:291px;width:83px;background:#3a3a3a"></div>
<div class="t" style="left:317px;top:885px;color:#dcdcdc;font-size:9.5px">Inbox for ...</div>
<div class="tb" style="left:376px;width:83px;background:#3a3a3a"></div>
<div class="t" style="left:402px;top:885px;color:#dcdcdc;font-size:9.5px">JavaEE Pe...</div>
<div class="tb" style="left:462px;width:83px;background:#555"></div>
<div class="t" style="left:488px;top:885px;color:#dcdcdc;font-size:9.5px">Laptop - o...</div>
<div class="tb" style="left:548px;width:83px;background:#3a3a3a"></div>
<div class="t" style="left:574px;top:885px;color:#dcdcdc;font-size:9.5px">.OpenMRS...</div>
<div class="tb" style="left:634px;width:82px;background:#3a3a3a"></div>
<div class="t" style="left:660px;top:885px;color:#dcdcdc;font-size:9.5px">Navicat</div>
<div class="tb" style="left:719px;width:83px;background:#3a3a3a"></div>
<div class="t" style="left:745px;top:885px;color:#dcdcdc;font-size:9.5px">Tomcat</div>
<div class="tb" style="left:805px;width:83px;background:#3a3a3a"></div>
<div class="t" style="left:831px;top:885px;color:#dcdcdc;font-size:9.5px">liquibase-...</div>
<div class="tb" style="left:891px;width:83px;background:#3a3a3a"></div>
<div class="t" style="left:917px;top:885px;color:#dcdcdc;font-size:9.5px">ben@RG-I...</div>
<svg class="abs" style="left:8px;top:880px" width="19" height="18" viewBox="0 0 19 18"><circle cx="9.5" cy="9" r="5.8" fill="none" stroke="#e87a20" stroke-width="2.6"/><circle cx="2.5" cy="9" r="2.1" fill="#f08a3a"/><circle cx="13" cy="2.8" r="2.1" fill="#c81a2a"/><circle cx="13" cy="15.2" r="2.1" fill="#f0c020"/></svg>
<div class="abs" style="left:199px;top:881px;width:6px;height:16px;background-image:radial-gradient(circle,#1c1c1c 0.8px,transparent 0.9px);background-size:3px 3px"></div>
<div class="abs" style="left:995px;top:881px;width:6px;height:16px;background-image:radial-gradient(circle,#1c1c1c 0.8px,transparent 0.9px);background-size:3px 3px"></div>
<svg class="abs" style="left:213px;top:882px" width="14" height="14" viewBox="0 0 14 14"><path d="M1.5 1.5 L12.5 12.5 M12.5 1.5 L1.5 12.5" stroke="#f29a1c" stroke-width="3"/><rect x="1" y="6" width="12" height="3" fill="#c8301a"/></svg>
<svg class="abs" style="left:298px;top:882px" width="14" height="14" viewBox="0 0 14 14"><circle cx="7" cy="7" r="6" fill="#3a7ad8"/><path d="M2 6 Q7 2 12 8 Q8 12 3 10 Z" fill="#c8d8f0"/></svg>
<svg class="abs" style="left:383px;top:882px" width="14" height="14" viewBox="0 0 14 14"><circle cx="7" cy="7" r="6.2" fill="#e85a10"/><circle cx="8" cy="6" r="3.5" fill="#3a6ad0"/><path d="M1 7 Q3 13 9 13 Q4 10 4 6 Z" fill="#f8a020"/></svg>
<svg class="abs" style="left:469px;top:882px" width="14" height="14" viewBox="0 0 14 14"><circle cx="7" cy="7.5" r="6" fill="#3a3ab0"/><path d="M1.5 6.5 H12.5 M1.5 8.5 H12.5" stroke="#fff" stroke-width="1"/><ellipse cx="5" cy="5" rx="2.5" ry="1.5" fill="#9a9ae8"/></svg>
<svg class="abs" style="left:555px;top:882px" width="13" height="14" viewBox="0 0 13 14"><rect x="1" y="1" width="11" height="12" rx="1" fill="#c8c8c8" stroke="#888" stroke-width="0.8"/><rect x="3" y="5" width="7" height="4" fill="#eee" stroke="#888" stroke-width="0.6"/></svg>
<svg class="abs" style="left:640px;top:881px" width="15" height="16" viewBox="0 0 15 16"><circle cx="7.5" cy="10" r="5.5" fill="#3a9a2a"/><path d="M1 6 Q4 0 7 5 Q10 0 14 5 Q11 8 7.5 6 Q4 8 1 6 Z" fill="#3aa0e0"/></svg>
<svg class="abs" style="left:725px;top:882px" width="14" height="13" viewBox="0 0 14 13"><rect x="0.5" y="0.5" width="13" height="12" rx="1" fill="#2a2a2a" stroke="#aaa" stroke-width="1"/><path d="M3 5 L5 6.5 L3 8 M6 9 H9" stroke="#ddd" stroke-width="0.9" fill="none"/></svg>
<svg class="abs" style="left:812px;top:882px" width="13" height="14" viewBox="0 0 13 14"><rect x="1" y="1" width="11" height="12" rx="1" fill="#c8c8c8" stroke="#888" stroke-width="0.8"/><rect x="3" y="5" width="7" height="4" fill="#eee" stroke="#888" stroke-width="0.6"/></svg>
<svg class="abs" style="left:897px;top:882px" width="14" height="13" viewBox="0 0 14 13"><rect x="0.5" y="0.5" width="13" height="12" rx="1" fill="#2a2a2a" stroke="#aaa" stroke-width="1"/><path d="M3 5 L5 6.5 L3 8 M6 9 H9" stroke="#ddd" stroke-width="0.9" fill="none"/></svg>
<svg class="abs" style="left:977px;top:881px" width="17" height="17" viewBox="0 0 17 17"><circle cx="8.5" cy="8.5" r="7.5" fill="#fff"/><path d="M4 9 Q4 4 9 4 L8 2 M13 8 Q13 13 8 13 L9 15" stroke="#111" stroke-width="1.8" fill="none"/></svg>
<svg class="abs" style="left:1003px;top:881px" width="17" height="17" viewBox="0 0 17 17"><path d="M5 1 H12 V8 H16 L8.5 16 L1 8 H5 Z" fill="#e01818"/><rect x="7.5" y="2.5" width="2" height="6" fill="#fff"/><rect x="7.5" y="10" width="2" height="2" fill="#fff"/></svg>
<svg class="abs" style="left:1021px;top:880px" width="19" height="18" viewBox="0 0 19 18"><rect x="0.5" y="0.5" width="18" height="13" fill="#2a5ab8" stroke="#d0d8e8" stroke-width="1"/><path d="M8 3 Q11 6 9 11" stroke="#c8d8f0" stroke-width="1.5" fill="none"/><rect x="6" y="14" width="7" height="2" fill="#d0d0d0"/><rect x="4" y="16" width="11" height="2" fill="#e0e0e0"/></svg>
<svg class="abs" style="left:1044px;top:882px" width="16" height="15" viewBox="0 0 16 15"><ellipse cx="8" cy="7.5" rx="7" ry="6.5" fill="#6ac83a"/><path d="M4.5 7.5 L7 10 L11.5 5" stroke="#fff" stroke-width="1.8" fill="none"/></svg>
<svg class="abs" style="left:1062px;top:880px" width="19" height="18" viewBox="0 0 19 18"><rect x="6" y="0.5" width="12" height="9" fill="#3a6ac8" stroke="#e0e0e0" stroke-width="1"/><rect x="0.5" y="5" width="12" height="9" fill="#3a6ac8" stroke="#e0e0e0" stroke-width="1"/><rect x="3" y="15" width="8" height="2.5" fill="#ddd"/></svg>
<svg class="abs" style="left:1082px;top:880px" width="19" height="19" viewBox="0 0 19 19"><path d="M2 2 L17 17 M17 2 L2 17" stroke="#f29a1c" stroke-width="3.5"/><text x="9.5" y="13" font-size="6" font-family="Liberation Sans" font-weight="bold" fill="#fff" text-anchor="middle">chat</text></svg>
<div class="t" style="left:1105px;top:885px;color:#e8e8e8;font-size:9.6px">Fri Oct 31,  2:35 PM</div>
</body></html>
